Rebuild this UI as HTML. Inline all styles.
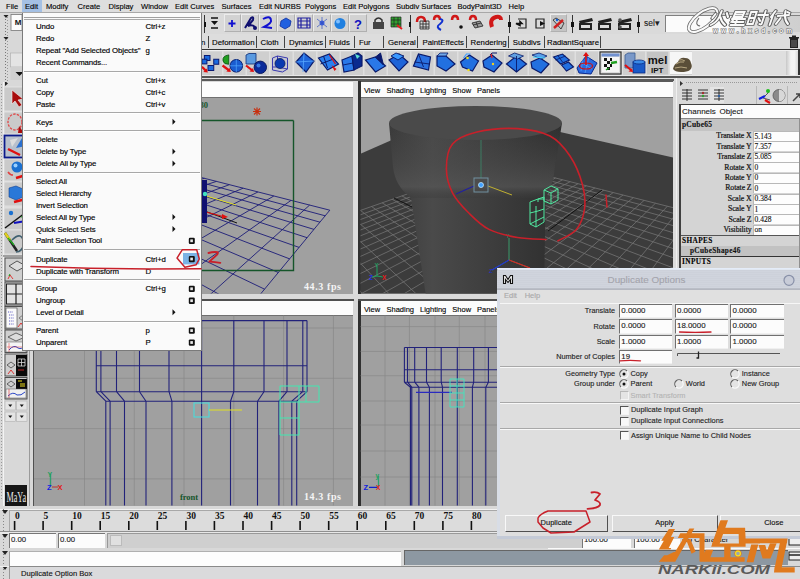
<!DOCTYPE html>
<html><head><meta charset="utf-8">
<style>
*{margin:0;padding:0;box-sizing:border-box}
html,body{width:800px;height:579px;overflow:hidden;background:#d8d8d8}
body{position:relative;font-family:"Liberation Sans",sans-serif;font-size:7.5px;color:#000}
.a{position:absolute}
.t{position:absolute;white-space:pre;line-height:1;-webkit-text-stroke-width:0.12px}
svg{position:absolute;overflow:visible}
</style></head><body>

<div class="a" style="left:0px;top:0px;width:800px;height:13px;background:#dedede;"></div>
<div class="a" style="left:0px;top:12px;width:800px;height:1px;background:#a8a8a8;"></div>
<div class="a" style="left:22px;top:0px;width:20px;height:12px;background:#a4c0e4;"></div>
<div class="t" style="left:6px;top:2.72px;font-size:7.6px;color:#000;">File</div>
<div class="t" style="left:25px;top:2.72px;font-size:7.6px;color:#000;">Edit</div>
<div class="t" style="left:46px;top:2.72px;font-size:7.6px;color:#000;">Modify</div>
<div class="t" style="left:77.5px;top:2.72px;font-size:7.6px;color:#000;">Create</div>
<div class="t" style="left:108.5px;top:2.72px;font-size:7.6px;color:#000;">Display</div>
<div class="t" style="left:141px;top:2.72px;font-size:7.6px;color:#000;">Window</div>
<div class="t" style="left:175px;top:2.72px;font-size:7.6px;color:#000;">Edit Curves</div>
<div class="t" style="left:221.5px;top:2.72px;font-size:7.6px;color:#000;">Surfaces</div>
<div class="t" style="left:259px;top:2.72px;font-size:7.6px;color:#000;">Edit NURBS</div>
<div class="t" style="left:305px;top:2.72px;font-size:7.6px;color:#000;">Polygons</div>
<div class="t" style="left:343px;top:2.72px;font-size:7.6px;color:#000;">Edit Polygons</div>
<div class="t" style="left:396px;top:2.72px;font-size:7.6px;color:#000;">Subdiv Surfaces</div>
<div class="t" style="left:457.5px;top:2.72px;font-size:7.6px;color:#000;">BodyPaint3D</div>
<div class="t" style="left:508.5px;top:2.72px;font-size:7.6px;color:#000;">Help</div>
<div class="a" style="left:0px;top:13px;width:800px;height:21px;background:#dadada;"></div>
<div class="a" style="left:204.2px;top:15px;width:1px;height:18px;background:#333;"></div>
<div class="a" style="left:203.6px;top:21.5px;width:2.2px;height:5px;background:#111;"></div>
<div class="a" style="left:223.5px;top:14px;width:17.0px;height:18px;background:#d2d2d2;border:1px solid;border-color:#ececec #b0b0b0 #b0b0b0 #ececec"></div>
<div class="a" style="left:240.5px;top:14px;width:18.0px;height:18px;background:#d2d2d2;border:1px solid;border-color:#ececec #b0b0b0 #b0b0b0 #ececec"></div>
<div class="a" style="left:258.5px;top:14px;width:18.5px;height:18px;background:#d2d2d2;border:1px solid;border-color:#ececec #b0b0b0 #b0b0b0 #ececec"></div>
<div class="a" style="left:277px;top:14px;width:18px;height:18px;background:#d2d2d2;border:1px solid;border-color:#ececec #b0b0b0 #b0b0b0 #ececec"></div>
<div class="a" style="left:295px;top:14px;width:18px;height:18px;background:#d2d2d2;border:1px solid;border-color:#ececec #b0b0b0 #b0b0b0 #ececec"></div>
<div class="a" style="left:313px;top:14px;width:18px;height:18px;background:#d2d2d2;border:1px solid;border-color:#ececec #b0b0b0 #b0b0b0 #ececec"></div>
<div class="a" style="left:331px;top:14px;width:18px;height:18px;background:#d2d2d2;border:1px solid;border-color:#ececec #b0b0b0 #b0b0b0 #ececec"></div>
<div class="a" style="left:349px;top:14px;width:18px;height:18px;background:#d2d2d2;border:1px solid;border-color:#ececec #b0b0b0 #b0b0b0 #ececec"></div>
<div class="a" style="left:550px;top:14px;width:17px;height:18px;background:#c4c4c4;border:1px solid;border-color:#ececec #b0b0b0 #b0b0b0 #ececec"></div>
<div class="a" style="left:409.5px;top:15px;width:1px;height:18px;background:#333;"></div>
<div class="a" style="left:408.9px;top:21.5px;width:2.2px;height:5px;background:#111;"></div>
<div class="a" style="left:509px;top:15px;width:1px;height:18px;background:#333;"></div>
<div class="a" style="left:508.4px;top:21.5px;width:2.2px;height:5px;background:#111;"></div>
<div class="a" style="left:572px;top:15px;width:1px;height:18px;background:#333;"></div>
<div class="a" style="left:571.4px;top:21.5px;width:2.2px;height:5px;background:#111;"></div>
<div class="a" style="left:638px;top:15px;width:1px;height:18px;background:#333;"></div>
<div class="a" style="left:637.4px;top:21.5px;width:2.2px;height:5px;background:#111;"></div>
<div class="a" style="left:665px;top:15px;width:135px;height:16.5px;background:linear-gradient(90deg,#fbfbfb 0,#fbfbfb 45%,#d4d4d4 75%,#cfcfcf 100%);border-top:1.5px solid #808080;border-left:1.5px solid #808080"></div>
<div class="t" style="left:644px;top:18.82px;font-size:8.5px;color:#222;">sel&#9662;</div>
<svg width="800" height="34" style="left:0;top:0">
<rect x="211" y="17" width="7" height="2" fill="#444"/><path d="M211 21h7l-3.5 4z" fill="#111"/><rect x="211" y="27" width="7" height="2" fill="#444"/>
<path d="M232 20v7M228.5 23.5h7" stroke="#1010d0" stroke-width="1.8"/>
<path d="M245 28 L251 18 Q254 16 253 20 L248 26 Q252 24 255 27" stroke="#101070" stroke-width="2" fill="none"/><circle cx="255" cy="28" r="2" fill="#101070"/>
<path d="M263 19 Q270 15 271 20 Q272 23 264 27 L272 28" stroke="#1010d0" stroke-width="2" fill="none"/>
<path d="M281 21 l5 -3 l5 3 l-1 5 l-5 3 l-5 -3z" fill="#2060e0" stroke="#1030a0" stroke-width="0.8"/>
<path d="M298 18 h12 v10 h-12z M301 18 v10 M307 18 v10 M298 21 h12 M298 25 h12" stroke="#2020a0" stroke-width="1.2" fill="none"/>
<circle cx="322" cy="23" r="2.5" fill="#4060e0"/><path d="M317 19l10 8M327 19l-10 8M322 17v12" stroke="#3050c0" stroke-width="0.7"/>
<circle cx="340" cy="23.5" r="5.5" fill="#2080e0"/><circle cx="338" cy="21.5" r="2" fill="#80c0ff"/>
<text x="354" y="29" font-family="Liberation Sans" font-weight="bold" font-size="13" fill="#1010c0">?</text>
<path d="M375 22 v-2 q3.5 -4 7 0 v2" stroke="#333" stroke-width="1.5" fill="none"/><rect x="373" y="22" width="11" height="7" fill="#444"/>
<rect x="391" y="17" width="10" height="10" fill="#30a030"/><path d="M391 17h10v10h-10zM394 17v10M398 17v10M391 20h10M391 24h10" stroke="#222" stroke-width="0.7" fill="none"/><path d="M397 25l5 4" stroke="#e02020" stroke-width="2"/>
<path d="M417 22 q0 -5 4 -5 q4 0 4 5" stroke="#d01818" stroke-width="2.5" fill="none"/><path d="M420 21h9v8h-9zM423 21v8M426 21v8M420 24h9M420 27h9" stroke="#222" stroke-width="0.8" fill="none"/>
<path d="M434 20 q0 -4 3 -4 q3 0 3 4" stroke="#d01818" stroke-width="2.5" fill="none"/><path d="M440 19 q5 1 0 5 q-5 3 1 6" stroke="#1030d0" stroke-width="2" fill="none"/>
<path d="M452 20 q0 -4 3 -4 q3 0 3 4" stroke="#d01818" stroke-width="2.5" fill="none"/><circle cx="461" cy="27" r="1.8" fill="#111"/>
<path d="M470 20 q0 -4 3 -4 q3 0 3 4" stroke="#d01818" stroke-width="2.5" fill="none"/><path d="M472 23l8 -2l3 5l-8 2z M476 22l2 5 M473 25l8 -2" stroke="#222" stroke-width="0.8" fill="#999"/>
<path d="M492 27 q-3 -8 4 -10 q5 -1 5 3" stroke="#d01818" stroke-width="4" fill="none"/>
<path d="M518 19h8v9h-8" stroke="#222" stroke-width="1.2" fill="none"/><path d="M516 23.5h6l-2 -2v4z" stroke="#111" stroke-width="1.5" fill="#111"/>
<path d="M536 19h8v9h-8z" stroke="#222" stroke-width="1.2" fill="none"/><path d="M540 21l5 2.5l-5 2.5z" fill="#111"/>
<path d="M553 20l3 -2 8 5 -3 6z" stroke="#222" stroke-width="0.8" fill="none"/><path d="M554 28l9 -8" stroke="#d02020" stroke-width="2.5"/><circle cx="557" cy="20" r="1.2" fill="#1060e0"/>
<path d="M579 21 l13 -3 l1 3 l-13 3z" fill="#222"/><rect x="579" y="23" width="13" height="7" fill="#222"/><rect x="581" y="25" width="9" height="3" fill="#ddd"/>
<path d="M598 21 l13 -3 l1 3 l-13 3z" fill="#222"/><rect x="598" y="23" width="13" height="7" fill="#222"/><rect x="600" y="25" width="9" height="3" fill="#ddd"/>
<path d="M618 21 l13 -3 l1 3 l-13 3z" fill="#222"/><rect x="618" y="23" width="13" height="7" fill="#222"/><rect x="620" y="25" width="9" height="3" fill="#ddd"/>
<circle cx="620" cy="20" r="1.8" fill="#555"/><circle cx="620" cy="27" r="1.8" fill="#555"/>
</svg>
<div class="a" style="left:0px;top:34px;width:800px;height:15px;background:#dddddd;"></div>
<div class="a" style="left:0px;top:48.5px;width:800px;height:1.5px;background:#333;"></div>
<div class="t" style="left:212px;top:39.01px;font-size:7.8px;color:#000;">Deformation</div>
<div class="t" style="left:260.5px;top:39.01px;font-size:7.8px;color:#000;">Cloth</div>
<div class="t" style="left:289px;top:39.01px;font-size:7.8px;color:#000;">Dynamics</div>
<div class="t" style="left:329px;top:39.01px;font-size:7.8px;color:#000;">Fluids</div>
<div class="t" style="left:359px;top:39.01px;font-size:7.8px;color:#000;">Fur</div>
<div class="t" style="left:388px;top:39.01px;font-size:7.8px;color:#000;">General</div>
<div class="t" style="left:422.5px;top:39.01px;font-size:7.8px;color:#000;">PaintEffects</div>
<div class="t" style="left:470.6px;top:39.01px;font-size:7.8px;color:#000;">Rendering</div>
<div class="t" style="left:512.8px;top:39.01px;font-size:7.8px;color:#000;">Subdivs</div>
<div class="t" style="left:547px;top:39.01px;font-size:7.8px;color:#000;">RadiantSquare</div>
<div class="a" style="left:207.7px;top:36px;width:1px;height:12px;background:#444;"></div>
<div class="a" style="left:256.4px;top:36px;width:1px;height:12px;background:#444;"></div>
<div class="a" style="left:283.9px;top:36px;width:1px;height:12px;background:#444;"></div>
<div class="a" style="left:325px;top:36px;width:1px;height:12px;background:#444;"></div>
<div class="a" style="left:354px;top:36px;width:1px;height:12px;background:#444;"></div>
<div class="a" style="left:383.4px;top:36px;width:1px;height:12px;background:#444;"></div>
<div class="a" style="left:417.4px;top:36px;width:1px;height:12px;background:#444;"></div>
<div class="a" style="left:466.2px;top:36px;width:1px;height:12px;background:#444;"></div>
<div class="a" style="left:508px;top:36px;width:1px;height:12px;background:#444;"></div>
<div class="a" style="left:543.9px;top:36px;width:1px;height:12px;background:#444;"></div>
<div class="a" style="left:600px;top:36px;width:1px;height:12px;background:#444;"></div>
<div class="t" style="left:201px;top:39.01px;font-size:7.8px;color:#000;">n</div>
<svg width="12" height="14" style="left:788px;top:35px"><rect x="2" y="3" width="8" height="10" fill="#222"/><rect x="1" y="2" width="10" height="1.5" fill="#222"/><rect x="4" y="0.5" width="4" height="1.5" fill="#222"/><path d="M4 5v7M6 5v7M8 5v7" stroke="#aaa" stroke-width="0.6"/></svg>
<div class="a" style="left:0px;top:50px;width:800px;height:26px;background:#dfdfdf;"></div>
<div class="a" style="left:0px;top:50px;width:800px;height:1px;background:#f0f0f0;"></div>
<div class="a" style="left:786px;top:51px;width:11.5px;height:24px;background:linear-gradient(90deg,#c8c8c8,#f2f2f2 40%,#f4f4f4 70%,#d8d8d8);"></div>
<div class="a" style="left:798px;top:50px;width:1.5px;height:26px;background:#333;"></div>
<div class="a" style="left:0px;top:74.5px;width:800px;height:1.5px;background:#e8e8e8;"></div>
<div class="a" style="left:0px;top:76px;width:800px;height:1.5px;background:#555;"></div>
<div class="a" style="left:0px;top:77.5px;width:800px;height:4px;background:#dedede;"></div>
<svg width="800" height="80" style="left:0;top:0">
<rect x="200" y="51.5" width="22" height="23.5" fill="#cfcfcf"/>
<rect x="223.5" y="51.5" width="22" height="23.5" fill="#cfcfcf"/>
<rect x="247" y="51.5" width="22" height="23.5" fill="#cfcfcf"/>
<rect x="270.5" y="51.5" width="22" height="23.5" fill="#cfcfcf"/>
<rect x="294" y="51.5" width="22" height="23.5" fill="#cfcfcf"/>
<rect x="317.5" y="51.5" width="22" height="23.5" fill="#cfcfcf"/>
<rect x="341" y="51.5" width="22" height="23.5" fill="#cfcfcf"/>
<rect x="364.5" y="51.5" width="22" height="23.5" fill="#cfcfcf"/>
<rect x="388" y="51.5" width="22" height="23.5" fill="#cfcfcf"/>
<rect x="411.5" y="51.5" width="22" height="23.5" fill="#cfcfcf"/>
<rect x="435" y="51.5" width="22" height="23.5" fill="#cfcfcf"/>
<rect x="458.5" y="51.5" width="22" height="23.5" fill="#cfcfcf"/>
<rect x="482" y="51.5" width="22" height="23.5" fill="#cfcfcf"/>
<rect x="505.5" y="51.5" width="22" height="23.5" fill="#cfcfcf"/>
<rect x="529" y="51.5" width="22" height="23.5" fill="#cfcfcf"/>
<rect x="552.5" y="51.5" width="22" height="23.5" fill="#cfcfcf"/>
<rect x="576" y="51.5" width="22" height="23.5" fill="#cfcfcf"/>
<rect x="599.5" y="51.5" width="22" height="23.5" fill="#cfcfcf"/>
<rect x="623" y="51.5" width="22" height="23.5" fill="#cfcfcf"/>
<rect x="646.5" y="51.5" width="22" height="23.5" fill="#cfcfcf"/>
<rect x="670" y="51.5" width="22" height="23.5" fill="#cfcfcf"/>
<rect x="204.4" y="55.5" width="5.599999999999994" height="5.0" fill="#1a6ae0" stroke="#0a1a70" stroke-width="1"/>
<rect x="201.9" y="59.2" width="5.0" height="4.699999999999996" fill="#1a6ae0" stroke="#0a1a70" stroke-width="1"/>
<rect x="213.75" y="59.25" width="5.0" height="5.0" fill="#1a6ae0" stroke="#0a1a70" stroke-width="1"/>
<rect x="208" y="65.5" width="5.75" height="5.0" fill="#1a6ae0" stroke="#0a1a70" stroke-width="1"/>
<path d="M201.9 66.75L206.3 71.1" stroke="#e01010" stroke-width="2.2"/><path d="M207.8 72.6l-4.5 -0.5 3.5 -3.5z" fill="#e01010"/>
<path d="M228.75 54.9 Q222 56 223 61 Q224 64.5 228.75 64.25z" fill="#20a020" stroke="#0a5010" stroke-width="0.8"/>
<circle cx="236.3" cy="65.8" r="6.3" fill="#1a5cd0" stroke="#0a2070" stroke-width="1"/><path d="M236.3 59.5v12.6M230 65.8h12.6" stroke="#50a8ff" stroke-width="0.7"/>
<path d="M222.5 65.5L229.3 70.5" stroke="#e01010" stroke-width="2.2"/><path d="M230.8 72l-4.5 -0.5 3.5 -3.5z" fill="#e01010"/>
<path d="M246 55l3 -1.5h7l0 9 -2 1.5h-8z" fill="#5a9ae0" stroke="#1a3a80" stroke-width="0.9"/>
<circle cx="260.3" cy="67.3" r="6.2" fill="#0a2a9a" stroke="#0a1a60" stroke-width="1"/><circle cx="258.5" cy="65.5" r="2" fill="#3a7ae0"/>
<path d="M246 65.5L252.5 70.5" stroke="#e01010" stroke-width="2.2"/><path d="M254 72l-4.5 -0.5 3.5 -3.5z" fill="#e01010"/>
<path d="M272.5 58l5 -2 10 2 0 11 -5 3 -10 -2z M277.5 56v11l10 2 M272.5 67l5 0" stroke="#3a3ab0" stroke-width="1" fill="#b8bcd8" fill-opacity="0.4"/>
<circle cx="280" cy="63.5" r="5" fill="#0a3ab0" stroke="#0a1a60" stroke-width="0.8"/>
<path d="M296 62l8 -9 10 8 -8 11z" fill="#1e64d8" stroke="#0a1a6a" stroke-width="1.2"/>
<path d="M304 53l-1 19M296 62l18 -1" stroke="#58a8ff" stroke-width="0.8"/>
<path d="M318.5 58l11 -4 9 10 -11 6z" fill="#2a80f0" stroke="#0a1a6a" stroke-width="1.2"/>
<path d="M323.5 56l4 12M320.5 64l13 -5" stroke="#0a1a6a" stroke-width="1"/><path d="M329.5 55l6 9" stroke="#e01010" stroke-width="1.3"/><path d="M331.5 65l3 6 2 -2z" fill="#e01010"/>
<path d="M342 60l10 -4 2 14 -10 2z" fill="#2a78e8" stroke="#0a1a6a" stroke-width="1.2"/>
<path d="M352 56l6 -3 4 3 0 10 -8 4z" fill="#0a2a90" stroke="#0a1a6a" stroke-width="1.1"/>
<path d="M355 54l5 2 -3 3z" fill="#60e0d0"/><path d="M343 65l10 -2" stroke="#0a1a6a" stroke-width="0.9"/>
<path d="M365.5 60l10 -3 10 9 -10 6z" fill="#2a78e8" stroke="#0a1a6a" stroke-width="1.2"/>
<path d="M375.5 57l5 -4 3 12z" fill="#0a1a70" stroke="#0a1a6a" stroke-width="1"/>
<path d="M389 60l10 -6 9 8 -9 9z" fill="#1e64d8" stroke="#0a1a6a" stroke-width="1.2"/>
<path d="M391 56l5 -3 8 3 -6 4z" fill="#3a98ff" stroke="#0a1a6a" stroke-width="0.9"/>
<path d="M413.5 66l5 -12 12 3 -2 13z" fill="#2a70e0" stroke="#0a1a6a" stroke-width="1.2"/>
<path d="M418.5 54l5 13M414.5 62l15 2" stroke="#0a1a6a" stroke-width="0.9"/>
<path d="M437 56h9l9 8 -9 7 -9 -5z" fill="#2270e0" stroke="#0a1a6a" stroke-width="1.2"/>
<path d="M437 56l3 -3h8l-2 3z" fill="#70a8e8" stroke="#0a1a6a" stroke-width="0.8"/>
<path d="M460.5 62l9 -7 9 6 -6 10 -10 -4z" fill="#2270e0" stroke="#0a1a6a" stroke-width="1.2"/>
<path d="M463.5 58l3 -4 4 0" stroke="#40a0ff" stroke-width="1.2" fill="none"/><circle cx="467.5" cy="58" r="1.3" fill="#f0e020"/><circle cx="468.5" cy="70" r="1.3" fill="#f0e020"/>
<path d="M483 61l9 -6 10 8 -8 9 -10 -5z" fill="#2270e0" stroke="#0a1a6a" stroke-width="1.2"/>
<path d="M490 55l2 -2h5" stroke="#0a1a6a" stroke-width="1" fill="none"/><path d="M491 54l1 4" stroke="#e02020" stroke-width="1.3"/><circle cx="493" cy="64" r="1.2" fill="#f0d020"/>
<path d="M506.5 64l10 -8 10 8 -10 8z" fill="#2270e0" stroke="#0a1a6a" stroke-width="1.2"/>
<path d="M508.5 56l6 -3 9 3 -6 3z" fill="#60a0e0" stroke="#0a1a6a" stroke-width="0.8"/>
<path d="M516.5 56v16" stroke="#0a1a6a" stroke-width="0.9"/>
<path d="M531 62l9 -4 9 6 -8 9 -9 -5z" fill="#2270e0" stroke="#0a1a6a" stroke-width="1.2"/>
<path d="M532 55l7 -2 8 3 -6 3z" fill="#5aa0e8" stroke="#0a1a6a" stroke-width="0.8"/>
<path d="M533 57l12 1" stroke="#40d0ff" stroke-width="1"/>
<path d="M553.5 57l9 -3 7 6 -9 4z" fill="#2270e0" stroke="#0a1a6a" stroke-width="1.1"/>
<path d="M561.5 65l7 -3 5 5 -7 4z" fill="#2270e0" stroke="#0a1a6a" stroke-width="1.1"/>
<path d="M557.5 55l5 7M555.5 60l10 -4" stroke="#0a1a6a" stroke-width="0.8"/>
<path d="M577 68l9 -12 11 7 -6 11 -12 -1z" fill="#2a6ae0" stroke="#0a2a90" stroke-width="1"/>
<path d="M581 62l11 7M583 59l-2 12M589 57l-4 16" stroke="#60b0ff" stroke-width="0.6"/>
<path d="M586 65v-11" stroke="#e01010" stroke-width="1.6"/><path d="M583 56l3 -4 3 4z" fill="#e01010"/><ellipse cx="586" cy="66" rx="6.5" ry="3" fill="none" stroke="#d01010" stroke-width="1.2"/>
<rect x="600" y="52" width="21" height="22" fill="#dcdcdc" stroke="#333" stroke-width="1.2"/>
<rect x="601.5" y="53.5" width="18" height="3" fill="#7090d0"/><rect x="602" y="57" width="17" height="15" fill="#f4f4f4"/>
<path d="M604 58h3v3h-3zM607 61h3v3h-3zM604 64h3v3h-3zM607 67h3v3h-3zM610 58h2v3h-2zM610 64h2v3h-2z" fill="#111"/><path d="M611 63l6 -1" stroke="#20a020" stroke-width="2.5"/><path d="M606 70l3 -2" stroke="#20a020" stroke-width="1.5"/>
<path d="M625 55l3 -2h7v13l-3 2h-7z" fill="#7a98c8" stroke="#3a5a90" stroke-width="0.8"/>
<rect x="633" y="62" width="12" height="11" fill="#1a5ac8" stroke="#0a2a80" stroke-width="0.8"/><ellipse cx="639" cy="62" rx="6" ry="2" fill="#3a8ae8" stroke="#0a2a80" stroke-width="0.8"/>
<path d="M625 65l6 5" stroke="#e01010" stroke-width="2.2"/><path d="M633 72l-4.5 -0.5 3.5 -3z" fill="#e01010"/>
<rect x="647" y="52" width="21" height="22" fill="#c4c4c4"/>
<text x="647.8" y="63.5" font-family="Liberation Sans" font-weight="bold" font-size="11" fill="#111" textLength="19.5" lengthAdjust="spacingAndGlyphs">mel</text>
<text x="651" y="72.5" font-family="Liberation Sans" font-weight="bold" font-size="8" fill="#111">IPT</text>
<rect x="670" y="52" width="22" height="22" fill="#f6f6f6"/>
<path d="M673 69q1 -5 5 -7q2 -5 7 -4q5 0 6 5q2 4 -1 7q-3 2 -9 2q-6 0 -8 -3z" fill="#5a4e38"/><path d="M676 64q4 -3 8 -2M679 60q3 -1 6 1M675 68q6 -2 12 0" stroke="#b8a882" stroke-width="1" fill="none"/>
</svg>
<div class="a" style="left:0px;top:82px;width:33px;height:424px;background:#d8d8d8;"></div>
<div class="a" style="left:29px;top:82px;width:1.2px;height:424px;background:#9a9a9a;"></div>
<div class="a" style="left:32.5px;top:82px;width:1.5px;height:424px;background:#505050;"></div>
<svg width="34" height="510" style="left:0;top:0">
<rect x="1" y="84" width="1" height="1" fill="#999"/>
<rect x="1" y="87" width="1" height="1" fill="#999"/>
<rect x="1" y="90" width="1" height="1" fill="#999"/>
<rect x="1" y="93" width="1" height="1" fill="#999"/>
<rect x="1" y="96" width="1" height="1" fill="#999"/>
<rect x="1" y="99" width="1" height="1" fill="#999"/>
<rect x="1" y="102" width="1" height="1" fill="#999"/>
<rect x="1" y="105" width="1" height="1" fill="#999"/>
<rect x="1" y="108" width="1" height="1" fill="#999"/>
<rect x="1" y="111" width="1" height="1" fill="#999"/>
<rect x="1" y="114" width="1" height="1" fill="#999"/>
<rect x="1" y="117" width="1" height="1" fill="#999"/>
<rect x="1" y="120" width="1" height="1" fill="#999"/>
<rect x="1" y="123" width="1" height="1" fill="#999"/>
<rect x="1" y="126" width="1" height="1" fill="#999"/>
<rect x="1" y="129" width="1" height="1" fill="#999"/>
<rect x="1" y="132" width="1" height="1" fill="#999"/>
<rect x="1" y="135" width="1" height="1" fill="#999"/>
<rect x="1" y="138" width="1" height="1" fill="#999"/>
<rect x="1" y="141" width="1" height="1" fill="#999"/>
<rect x="1" y="144" width="1" height="1" fill="#999"/>
<rect x="1" y="147" width="1" height="1" fill="#999"/>
<rect x="1" y="150" width="1" height="1" fill="#999"/>
<rect x="1" y="153" width="1" height="1" fill="#999"/>
<rect x="1" y="156" width="1" height="1" fill="#999"/>
<rect x="1" y="159" width="1" height="1" fill="#999"/>
<rect x="1" y="162" width="1" height="1" fill="#999"/>
<rect x="1" y="165" width="1" height="1" fill="#999"/>
<rect x="1" y="168" width="1" height="1" fill="#999"/>
<rect x="1" y="171" width="1" height="1" fill="#999"/>
<rect x="1" y="174" width="1" height="1" fill="#999"/>
<rect x="1" y="177" width="1" height="1" fill="#999"/>
<rect x="1" y="180" width="1" height="1" fill="#999"/>
<rect x="1" y="183" width="1" height="1" fill="#999"/>
<rect x="1" y="186" width="1" height="1" fill="#999"/>
<rect x="1" y="189" width="1" height="1" fill="#999"/>
<rect x="1" y="192" width="1" height="1" fill="#999"/>
<rect x="1" y="195" width="1" height="1" fill="#999"/>
<rect x="1" y="198" width="1" height="1" fill="#999"/>
<rect x="1" y="201" width="1" height="1" fill="#999"/>
<rect x="1" y="204" width="1" height="1" fill="#999"/>
<rect x="1" y="207" width="1" height="1" fill="#999"/>
<rect x="1" y="210" width="1" height="1" fill="#999"/>
<rect x="1" y="213" width="1" height="1" fill="#999"/>
<rect x="1" y="216" width="1" height="1" fill="#999"/>
<rect x="1" y="219" width="1" height="1" fill="#999"/>
<rect x="1" y="222" width="1" height="1" fill="#999"/>
<rect x="1" y="225" width="1" height="1" fill="#999"/>
<rect x="1" y="228" width="1" height="1" fill="#999"/>
<rect x="1" y="231" width="1" height="1" fill="#999"/>
<rect x="1" y="234" width="1" height="1" fill="#999"/>
<rect x="1" y="237" width="1" height="1" fill="#999"/>
<rect x="1" y="240" width="1" height="1" fill="#999"/>
<rect x="1" y="243" width="1" height="1" fill="#999"/>
<rect x="1" y="246" width="1" height="1" fill="#999"/>
<rect x="1" y="249" width="1" height="1" fill="#999"/>
<rect x="1" y="252" width="1" height="1" fill="#999"/>
<rect x="1" y="255" width="1" height="1" fill="#999"/>
<rect x="1" y="258" width="1" height="1" fill="#999"/>
<rect x="1" y="261" width="1" height="1" fill="#999"/>
<rect x="1" y="264" width="1" height="1" fill="#999"/>
<rect x="1" y="267" width="1" height="1" fill="#999"/>
<rect x="1" y="270" width="1" height="1" fill="#999"/>
<rect x="1" y="273" width="1" height="1" fill="#999"/>
<rect x="1" y="276" width="1" height="1" fill="#999"/>
<rect x="1" y="279" width="1" height="1" fill="#999"/>
<rect x="1" y="282" width="1" height="1" fill="#999"/>
<rect x="1" y="285" width="1" height="1" fill="#999"/>
<rect x="1" y="288" width="1" height="1" fill="#999"/>
<rect x="1" y="291" width="1" height="1" fill="#999"/>
<rect x="1" y="294" width="1" height="1" fill="#999"/>
<rect x="1" y="297" width="1" height="1" fill="#999"/>
<rect x="1" y="300" width="1" height="1" fill="#999"/>
<rect x="1" y="303" width="1" height="1" fill="#999"/>
<rect x="1" y="306" width="1" height="1" fill="#999"/>
<rect x="1" y="309" width="1" height="1" fill="#999"/>
<rect x="1" y="312" width="1" height="1" fill="#999"/>
<rect x="1" y="315" width="1" height="1" fill="#999"/>
<rect x="1" y="318" width="1" height="1" fill="#999"/>
<rect x="1" y="321" width="1" height="1" fill="#999"/>
<rect x="1" y="324" width="1" height="1" fill="#999"/>
<rect x="1" y="327" width="1" height="1" fill="#999"/>
<rect x="1" y="330" width="1" height="1" fill="#999"/>
<rect x="1" y="333" width="1" height="1" fill="#999"/>
<rect x="1" y="336" width="1" height="1" fill="#999"/>
<rect x="1" y="339" width="1" height="1" fill="#999"/>
<rect x="1" y="342" width="1" height="1" fill="#999"/>
<rect x="1" y="345" width="1" height="1" fill="#999"/>
<rect x="1" y="348" width="1" height="1" fill="#999"/>
<rect x="1" y="351" width="1" height="1" fill="#999"/>
<rect x="1" y="354" width="1" height="1" fill="#999"/>
<rect x="1" y="357" width="1" height="1" fill="#999"/>
<rect x="1" y="360" width="1" height="1" fill="#999"/>
<rect x="1" y="363" width="1" height="1" fill="#999"/>
<rect x="1" y="366" width="1" height="1" fill="#999"/>
<rect x="1" y="369" width="1" height="1" fill="#999"/>
<rect x="1" y="372" width="1" height="1" fill="#999"/>
<rect x="1" y="375" width="1" height="1" fill="#999"/>
<rect x="1" y="378" width="1" height="1" fill="#999"/>
<rect x="1" y="381" width="1" height="1" fill="#999"/>
<rect x="1" y="384" width="1" height="1" fill="#999"/>
<rect x="1" y="387" width="1" height="1" fill="#999"/>
<rect x="1" y="390" width="1" height="1" fill="#999"/>
<rect x="1" y="393" width="1" height="1" fill="#999"/>
<rect x="1" y="396" width="1" height="1" fill="#999"/>
<rect x="1" y="399" width="1" height="1" fill="#999"/>
<rect x="1" y="402" width="1" height="1" fill="#999"/>
<rect x="1" y="405" width="1" height="1" fill="#999"/>
<rect x="1" y="408" width="1" height="1" fill="#999"/>
<rect x="1" y="411" width="1" height="1" fill="#999"/>
<rect x="1" y="414" width="1" height="1" fill="#999"/>
<rect x="1" y="417" width="1" height="1" fill="#999"/>
<rect x="1" y="420" width="1" height="1" fill="#999"/>
<rect x="1" y="423" width="1" height="1" fill="#999"/>
<rect x="1" y="426" width="1" height="1" fill="#999"/>
<rect x="1" y="429" width="1" height="1" fill="#999"/>
<rect x="1" y="432" width="1" height="1" fill="#999"/>
<rect x="1" y="435" width="1" height="1" fill="#999"/>
<rect x="1" y="438" width="1" height="1" fill="#999"/>
<rect x="1" y="441" width="1" height="1" fill="#999"/>
<rect x="1" y="444" width="1" height="1" fill="#999"/>
<rect x="1" y="447" width="1" height="1" fill="#999"/>
<rect x="1" y="450" width="1" height="1" fill="#999"/>
<rect x="1" y="453" width="1" height="1" fill="#999"/>
<rect x="1" y="456" width="1" height="1" fill="#999"/>
<rect x="1" y="459" width="1" height="1" fill="#999"/>
<rect x="1" y="462" width="1" height="1" fill="#999"/>
<rect x="1" y="465" width="1" height="1" fill="#999"/>
<rect x="1" y="468" width="1" height="1" fill="#999"/>
<rect x="1" y="471" width="1" height="1" fill="#999"/>
<rect x="1" y="474" width="1" height="1" fill="#999"/>
<rect x="1" y="477" width="1" height="1" fill="#999"/>
<rect x="1" y="480" width="1" height="1" fill="#999"/>
<rect x="1" y="483" width="1" height="1" fill="#999"/>
<rect x="1" y="486" width="1" height="1" fill="#999"/>
<rect x="1" y="489" width="1" height="1" fill="#999"/>
<rect x="1" y="492" width="1" height="1" fill="#999"/>
<rect x="1" y="495" width="1" height="1" fill="#999"/>
<rect x="1" y="498" width="1" height="1" fill="#999"/>
<rect x="3" y="81" width="1" height="425" fill="#f4f4f4"/>
<path d="M5 81l3 2.5 -3 2.5z" fill="#222"/>
<rect x="4" y="87" width="24" height="24" fill="#cacaca" stroke="#e6e6e6" stroke-width="0.8"/>
<rect x="4" y="112" width="24" height="22" fill="#cacaca" stroke="#e6e6e6" stroke-width="0.8"/>
<rect x="4" y="135" width="24" height="23" fill="#cacaca" stroke="#e6e6e6" stroke-width="0.8"/>
<rect x="4" y="159" width="24" height="22" fill="#cacaca" stroke="#e6e6e6" stroke-width="0.8"/>
<rect x="4" y="182" width="24" height="24" fill="#cacaca" stroke="#e6e6e6" stroke-width="0.8"/>
<rect x="4" y="208" width="24" height="22" fill="#cacaca" stroke="#e6e6e6" stroke-width="0.8"/>
<rect x="4" y="230" width="24" height="24" fill="#cacaca" stroke="#e6e6e6" stroke-width="0.8"/>
<path d="M12 90l0 14 3 -3 4 6 3 -2 -4 -5 5 -1z" fill="#a80c0c" stroke="#f4f4f4" stroke-width="0.6"/>
<ellipse cx="15" cy="122" rx="7" ry="8" fill="none" stroke="#e04848" stroke-width="1.3" stroke-dasharray="2.5 1.2"/><path d="M19 126l5 7 -6 0z" fill="#a80c0c"/>
<rect x="4.5" y="135.5" width="23" height="22" fill="#b8c0cc" stroke="#0a1a8a" stroke-width="1.8"/>
<path d="M10 140l8 -2 -6 9z" fill="#dddddd"/><path d="M16 148l6 -10 4 8z" fill="#2a70d0"/><path d="M8 149l12 6" stroke="#e01010" stroke-width="2.5"/>
<circle cx="17" cy="167" r="5.5" fill="#1a70d0"/><circle cx="15.5" cy="165.5" r="2" fill="#9ad0ff"/><path d="M8 172q2 3 5 3" stroke="#e04040" stroke-width="1.5" fill="none"/><path d="M16 178l10 -3" stroke="#e01010" stroke-width="2.5"/>
<path d="M9 188l7 -2 7 3 0 8 -7 3 -7 -3z" fill="#2a78d8" stroke="#104090" stroke-width="0.6"/><path d="M14 202l12 -3" stroke="#e01010" stroke-width="2.5"/>
<circle cx="11" cy="213" r="2.2" fill="#1a70d0"/><path d="M5 228l20 -15" stroke="#111" stroke-width="1.5"/><path d="M14 223l12 -2" stroke="#1010c0" stroke-width="2"/><path d="M22 216l3 6" stroke="#10b010" stroke-width="2"/>
<path d="M5 233l12 18" stroke="#222" stroke-width="2.5"/><path d="M5 233l5 7" stroke="#e0d020" stroke-width="2.5"/><path d="M12 240q10 -10 12 4q-2 8 -8 8" stroke="#406070" stroke-width="1.6" fill="none"/><path d="M8 238l6 7" stroke="#20b020" stroke-width="1.2"/>
<rect x="3" y="255" width="26" height="2" fill="#a0a0a0"/>
<rect x="5" y="258" width="22" height="23" fill="#cfcfcf" stroke="#444" stroke-width="0.9"/>
<rect x="5" y="282" width="22" height="24" fill="#cfcfcf" stroke="#444" stroke-width="0.9"/>
<rect x="5" y="306.5" width="22" height="22.5" fill="#cfcfcf" stroke="#444" stroke-width="0.9"/>
<rect x="5" y="330" width="22" height="22.5" fill="#cfcfcf" stroke="#444" stroke-width="0.9"/>
<rect x="5" y="354" width="22" height="22" fill="#cfcfcf" stroke="#444" stroke-width="0.9"/>
<rect x="5" y="377.5" width="22" height="21.5" fill="#cfcfcf" stroke="#444" stroke-width="0.9"/>
<path d="M9 266l8 -5 9 5 -9 5z" fill="#dcdcdc" stroke="#333" stroke-width="0.8"/><path d="M8 279l2 -4 3 4" stroke="#e01010" stroke-width="0.8" fill="none"/><path d="M9 276l1 -2" stroke="#10a010" stroke-width="1"/>
<rect x="6.5" y="284" width="19" height="20" fill="#e2e2e2" stroke="#222" stroke-width="1"/><path d="M16 284v20M6.5 294h19" stroke="#222" stroke-width="1.2"/>
<rect x="6" y="308" width="11" height="20" fill="#fafafa" stroke="#444" stroke-width="0.6"/><path d="M8 312h5M9 315h5M9 318h5M9 321h5M9 324h5" stroke="#5050c0" stroke-width="0.9" stroke-dasharray="1 0.8"/><path d="M19 318l4 -3 4 3 -4 3z" fill="none" stroke="#444" stroke-width="0.6"/><path d="M18 327l3 -4 3 4" stroke="#e01010" stroke-width="0.8" fill="none"/>
<path d="M8 337l8 -4 9 4 -9 4z" fill="#dcdcdc" stroke="#333" stroke-width="0.7"/><rect x="6" y="342" width="20" height="10" fill="#f4f4f4" stroke="#555" stroke-width="0.5"/><path d="M9 350q5 -6 9 -2q4 2 7 -3" stroke="#1030c0" stroke-width="0.9" fill="none"/><path d="M9 343v9M7 347h18" stroke="#e03030" stroke-width="0.5"/>
<path d="M7 365l4 -3 4 3 -4 3z" fill="none" stroke="#333" stroke-width="0.7"/><rect x="16" y="355" width="11" height="21" fill="#0a0a0a"/><path d="M18 359h7v7h-7zM21.5 359v7M18 362.5h7" stroke="#ddd" stroke-width="0.8" fill="none"/><path d="M8 374l3 -4 3 4" stroke="#e01010" stroke-width="0.8" fill="none"/><path d="M18 370h6" stroke="#a02020" stroke-width="1.2"/>
<path d="M7 384l4 -3 4 3 -4 3z" fill="none" stroke="#333" stroke-width="0.7"/><rect x="16" y="379" width="11" height="10" fill="#0a0a0a"/><path d="M18 381h4M20 384h5M20 386h5" stroke="#f0e020" stroke-width="1.2"/><rect x="6" y="389" width="20" height="9" fill="#f0f0f0" stroke="#555" stroke-width="0.5"/><path d="M8 396q5 -5 9 -1q4 1 8 -3" stroke="#1030c0" stroke-width="0.9" fill="none"/><path d="M9 389v9" stroke="#e03030" stroke-width="0.6"/>
<rect x="5" y="401" width="10.5" height="9" fill="#e4e4e4" stroke="#b0b0b0" stroke-width="0.6"/><path d="M8.25 404.5h4l-2 2.5z" fill="#111"/>
<rect x="16.5" y="401" width="10.5" height="9" fill="#e4e4e4" stroke="#b0b0b0" stroke-width="0.6"/><path d="M19.75 404.5h4l-2 2.5z" fill="#111"/>
<rect x="5" y="412" width="10.5" height="9.5" fill="#e4e4e4" stroke="#b0b0b0" stroke-width="0.6"/><path d="M8.25 415.5h4l-2 2.5z" fill="#111"/>
<rect x="16.5" y="412" width="10.5" height="9.5" fill="#e4e4e4" stroke="#b0b0b0" stroke-width="0.6"/><path d="M19.75 415.5h4l-2 2.5z" fill="#111"/>
<rect x="5" y="485" width="22" height="21" fill="#161616"/>
<text x="6.5" y="502" font-family="Liberation Serif" font-size="15" fill="#ececec" textLength="19.5" lengthAdjust="spacingAndGlyphs">MaYa</text>
</svg>
<div class="a" style="left:33.5px;top:79px;width:640px;height:2.5px;background:#5a5a5a;"></div>
<div class="a" style="left:33.5px;top:81px;width:320px;height:213px;background:#d8d8d8;"></div>
<div class="a" style="left:34px;top:82px;width:318.5px;height:14.5px;background:#fcfcfc;"></div>
<div class="a" style="left:34px;top:96.5px;width:318.5px;height:1px;background:#707070;"></div>
<div class="a" style="left:34px;top:97.5px;width:318.5px;height:196px;background:#a0a0a0;"></div>
<div class="a" style="left:352.5px;top:81px;width:6px;height:219px;background:#dcdcdc;"></div>
<div class="a" style="left:358px;top:81px;width:2.5px;height:213px;background:#303030;"></div>
<div class="a" style="left:360.5px;top:82px;width:312.5px;height:14.5px;background:#fcfcfc;"></div>
<div class="a" style="left:360.5px;top:96.5px;width:312.5px;height:1px;background:#707070;"></div>
<div class="a" style="left:360.5px;top:97.5px;width:312.5px;height:196px;background:#a0a0a0;"></div>
<div class="a" style="left:673px;top:81px;width:4px;height:213px;background:#dcdcdc;"></div>
<div class="a" style="left:33.5px;top:293.5px;width:645px;height:6px;background:#dadada;"></div>
<div class="a" style="left:33.5px;top:299px;width:320px;height:2px;background:#505050;"></div>
<div class="a" style="left:358px;top:299px;width:320px;height:2px;background:#505050;"></div>
<div class="a" style="left:34px;top:301px;width:318.5px;height:13.5px;background:#fcfcfc;"></div>
<div class="a" style="left:34px;top:314.5px;width:318.5px;height:1px;background:#707070;"></div>
<div class="a" style="left:34px;top:315.5px;width:318.5px;height:190px;background:#a0a0a0;"></div>
<div class="a" style="left:358px;top:301px;width:2.5px;height:205px;background:#303030;"></div>
<div class="a" style="left:360.5px;top:301px;width:140px;height:13.5px;background:#fcfcfc;"></div>
<div class="a" style="left:360.5px;top:314.5px;width:140px;height:1px;background:#707070;"></div>
<div class="a" style="left:360.5px;top:315.5px;width:140px;height:190px;background:#a0a0a0;"></div>
<div class="a" style="left:33.5px;top:505.5px;width:645px;height:3px;background:#dadada;"></div>
<div class="t" style="left:364px;top:87.08px;font-size:7.5px;color:#000;">View</div>
<div class="t" style="left:364px;top:305.68px;font-size:7.5px;color:#000;">View</div>
<div class="t" style="left:386.5px;top:87.08px;font-size:7.5px;color:#000;">Shading</div>
<div class="t" style="left:386.5px;top:305.68px;font-size:7.5px;color:#000;">Shading</div>
<div class="t" style="left:420px;top:87.08px;font-size:7.5px;color:#000;">Lighting</div>
<div class="t" style="left:420px;top:305.68px;font-size:7.5px;color:#000;">Lighting</div>
<div class="t" style="left:452.3px;top:87.08px;font-size:7.5px;color:#000;">Show</div>
<div class="t" style="left:452.3px;top:305.68px;font-size:7.5px;color:#000;">Show</div>
<div class="t" style="left:477px;top:87.08px;font-size:7.5px;color:#000;">Panels</div>
<div class="t" style="left:477px;top:305.68px;font-size:7.5px;color:#000;">Panels</div>
<svg width="800" height="579" style="left:0;top:0"><defs><clipPath id="c1"><rect x="34" y="97.5" width="318.5" height="196"/></clipPath><clipPath id="c2"><rect x="360.5" y="97.5" width="312.5" height="196"/></clipPath><clipPath id="c3"><rect x="34" y="315.5" width="318.5" height="190"/></clipPath><clipPath id="c4"><rect x="360.5" y="315.5" width="140" height="190"/></clipPath><linearGradient id="cyl" x1="0" x2="1" y1="0" y2="0"><stop offset="0" stop-color="#3a3a3a"/><stop offset="0.25" stop-color="#4a4a4a"/><stop offset="1" stop-color="#2e2e2e"/></linearGradient><linearGradient id="cylb" x1="0" x2="0" y1="0" y2="1"><stop offset="0" stop-color="#484848"/><stop offset="1" stop-color="#3a3a3a"/></linearGradient><linearGradient id="cylup" x1="0" x2="0" y1="0" y2="1"><stop offset="0" stop-color="#484848" stop-opacity="0"/><stop offset="0.55" stop-color="#4e4e4e" stop-opacity="0.5"/><stop offset="0.85" stop-color="#565656" stop-opacity="0.7"/><stop offset="1" stop-color="#3a3a3a" stop-opacity="0.3"/></linearGradient></defs>
<g clip-path="url(#c1)">
<path d="M329.8 210.2L1.2 607.9M309.6 205.1L-29.2 509.8M291.0 200.4L-50.0 442.7M273.8 196.0L-65.2 394.0M257.9 192.0L-76.7 356.9M243.1 188.2L-85.7 327.8M229.3 184.7L-93.0 304.4M216.4 181.4L-99.0 285.0M204.4 178.3L-104.0 268.8M193.1 175.5L-108.3 255.1M182.4 172.8L-111.9 243.2M172.4 170.2L-115.1 232.9M163.0 167.8L-117.9 223.9M154.0 165.6L-120.4 215.9M145.6 163.4L-122.6 208.8M137.6 161.4L-124.6 202.4M130.0 159.4L-126.4 196.7M329.8 210.2L130.0 159.4M325.2 215.8L120.2 160.9M320.0 222.2L109.6 162.4M314.0 229.4L98.3 164.0M307.1 237.7L86.0 165.8M299.1 247.4L72.8 167.8M289.7 258.9L58.3 169.8M278.4 272.5L42.6 172.1M264.6 289.2L25.3 174.6M247.5 309.9L6.4 177.4M225.6 336.4L-14.6 180.4M196.7 371.4L-37.9 183.8M156.6 419.8L-63.9 187.6M97.4 491.4L-93.2 191.9M1.2 607.9L-126.4 196.7" stroke="#1c1c78" stroke-width="0.9" fill="none"/>
<path d="M293.5 120.5V270.5H34M293.5 120.5H34" stroke="#15552a" stroke-width="1.4" fill="none"/>
<path d="M202 210l35 13" stroke="#111" stroke-width="1"/><path d="M203 195l33 10" stroke="#e0e020" stroke-width="1"/><path d="M202 211l23 6" stroke="#e01010" stroke-width="1.2"/><path d="M222 214l6 3 -6 2z" fill="#e01010"/>
<rect x="199" y="180" width="8" height="43" fill="#101070"/><circle cx="205" cy="194" r="2.2" fill="#40e0c0"/>
<path d="M253 111.5h8M257 107.5v8M254 108.5l6 6M260 108.5l-6 6" stroke="#c83010" stroke-width="1.2"/>
<text x="199.5" y="107.8" font-family="Liberation Serif" font-weight="bold" font-size="8.5" fill="#15552a">80</text>
<text x="304" y="289.8" font-family="Liberation Serif" font-weight="bold" font-size="10" fill="#f4f4f4" textLength="37">44.3 fps</text>
</g>
<g clip-path="url(#c2)">
<path d="M360 153.9 L460.6 109.7 L676 158.1 L676 300 L360 300z" fill="#3c3c3c"/>
<path d="M496.0 163.0L227.2 257.0M501.0 164.3L228.2 262.3M506.3 165.6L229.2 268.1M511.6 166.9L230.3 274.2M517.2 168.4L231.5 280.7M523.0 169.8L232.8 287.7M529.0 171.3L234.1 295.2M535.2 172.9L235.6 303.4M541.7 174.5L237.2 312.1M548.4 176.2L238.9 321.7M555.4 178.0L240.8 332.1M562.6 179.8L242.9 343.4M570.2 181.7L245.1 355.8M578.1 183.7L247.6 369.5M586.3 185.8L250.4 384.7M594.9 187.9L253.4 401.6M603.8 190.2L256.9 420.6M613.2 192.6L260.8 442.0M623.0 195.0L265.2 466.3M633.3 197.6L270.3 494.2M644.1 200.4L276.1 526.6M655.5 203.2L283.0 564.5M667.4 206.2L291.2 609.6M680.0 209.4L301.1 664.1M693.3 212.7L313.3 731.4M707.3 216.3L328.7 816.4M722.1 220.0L348.9 927.3M737.8 224.0L376.2 1077.9M754.5 228.2L415.5 1294.4M772.3 232.7L476.8 1631.9M791.2 237.4L585.7 2231.6M811.4 242.5L832.7 3592.7M833.0 248.0L1938.8 9685.3M496.0 163.0L833.0 248.0M490.3 165.0L833.9 255.6M484.4 167.0L834.8 263.9M478.3 169.2L835.9 272.8M472.0 171.4L837.0 282.6M465.4 173.7L838.3 293.2M458.6 176.1L839.7 304.9M451.5 178.6L841.2 317.8M444.1 181.2L842.8 332.1M436.3 183.9L844.7 348.0M428.3 186.7L846.8 365.8M419.9 189.6L849.1 385.9M411.1 192.7L851.8 408.8M401.9 195.9L854.9 435.1M392.2 199.3L858.5 465.5M382.1 202.8L862.7 501.3M371.5 206.5L867.6 543.8M360.4 210.4L873.7 595.2M348.7 214.5L881.1 658.7M336.3 218.8L890.5 739.1M323.3 223.4L902.8 844.0M309.6 228.2L919.6 986.8M295.0 233.3L943.7 1192.6M279.6 238.7L981.4 1514.8M263.2 244.4L1048.9 2091.0M245.8 250.5L1204.3 3417.1M227.2 257.0L1938.8 9685.3" stroke="#747474" stroke-width="0.8" fill="none"/>
<path d="M548 231L602 190M394 198L412 207" stroke="#111" stroke-width="1"/>
<path d="M389 123 L393 167 C394.5 180 400 189 411 198 L426 296 L544 296 L545.6 198 C550 190 554 180 555 167 L562 123z" fill="url(#cyl)"/>
<path d="M389 123 L393 167 C394.5 180 400 189 411 198 L545.6 198 C550 190 554 180 555 167 L562 123z" fill="url(#cylup)"/>
<ellipse cx="475.5" cy="123" rx="86.5" ry="17" fill="#4a4a4a"/>
<path d="M481 178V140" stroke="#3a8a6a" stroke-width="0.8"/><path d="M488 186l24 9" stroke="#c0b030" stroke-width="1"/><path d="M474 186l-18 8" stroke="#2020a0" stroke-width="1.2"/>
<rect x="474" y="178" width="14" height="14" fill="none" stroke="#7090a0" stroke-width="1"/><circle cx="481" cy="185" r="2.5" fill="#40a0ff" stroke="#c0e8ff" stroke-width="0.8"/>
<path d="M544 190l7 -4 7 3v11l-7 4 -7 -3z M544 190l7 3v11 M551 193l7 -4 M538 199l6 -2v10 M530 202l8 -3h6 M530 202v22l6 3 8 -5v-15 M530 213l8 -2 6 -2 M536 206v21 M538 199v3 M530 224l14 -7" stroke="#50e8a0" stroke-width="1" fill="none"/>
<path d="M509 238V260M509 260l21 8M509 260l-17 10" stroke="#3a9a6a" stroke-width="1"/><path d="M509 260l21 8" stroke="#e02020" stroke-width="1.2"/><path d="M509 260l-17 10" stroke="#2030d0" stroke-width="1.2"/>
<text x="506" y="238" font-family="Liberation Sans" font-size="5" fill="#40b080">Y</text><text x="528" y="273" font-family="Liberation Sans" font-size="6" fill="#e02020">X</text><text x="489" y="273" font-family="Liberation Sans" font-size="6" fill="#2030d0">Z</text>
<path d="M377 266v10M377 276l-5 1M377 276l6 1" stroke="#20a060" stroke-width="1"/><text x="374.5" y="267" font-family="Liberation Sans" font-weight="bold" font-size="6" fill="#20a060">Y</text><text x="369" y="280" font-family="Liberation Sans" font-weight="bold" font-size="6.5" fill="#2030e0">Z</text><text x="382" y="280" font-family="Liberation Sans" font-weight="bold" font-size="6.5" fill="#e02020">X</text>
</g>
<g clip-path="url(#c3)">
<path d="M84.5 315V506M134.3 315V506M184 315V506M233.8 315V506M283.6 315V506M333.4 315V506M34 328H353M34 378.3H353M34 428.6H353M34 478.9H353" stroke="#888" stroke-width="0.7" fill="none"/>
<path d="M96.3 320.6H307M96.3 365.8H307M96.3 391.7H307M105.8 401.2H297.6M96.3 320.6V391.7M100.9 320.6V391.7M116.5 320.6V391.7M139.5 320.6V391.7M169 320.6V391.7M201.6 320.6V391.7M233.8 320.6V391.7M264 320.6V391.7M287 320.6V391.7M302.8 320.6V391.7M307 320.6V391.7M105.8 401.2V506M110.1 401.2V506M124.5 401.2V506M146 401.2V506M171.9 401.2V506M201.6 401.2V506M230.5 401.2V506M257.5 401.2V506M278.9 401.2V506M291.8 401.2V506M296.7 401.2V506M96.3 391.7L105.8 401.2M100.9 391.7L110.1 401.2M116.5 391.7L124.5 401.2M139.5 391.7L146 401.2M169 391.7L171.9 401.2M201.6 391.7L201.6 401.2M233.8 391.7L230.5 401.2M264 391.7L257.5 401.2M287 391.7L278.9 401.2M302.8 391.7L291.8 401.2M307 391.7L296.7 401.2" stroke="#22227a" stroke-width="1.1" fill="none"/>
<rect x="194" y="403" width="15" height="14" fill="none" stroke="#40e0e0" stroke-width="1"/><path d="M209 410H242" stroke="#e0e020" stroke-width="1"/>
<path d="M280 386h39v16h-39zM280 402v33h19v-33M299 386v16M306 386v16M280 418h19" stroke="#40e8b0" stroke-width="1" fill="none"/>
<path d="M50.5 474v11" stroke="#30a070" stroke-width="1.4"/><text x="47.5" y="477" font-family="Liberation Sans" font-weight="bold" font-size="7" fill="#20a060">Y</text><path d="M52 487h6" stroke="#c03030" stroke-width="1"/><text x="47" y="489.5" font-family="Liberation Sans" font-weight="bold" font-size="7.5" fill="#1020e0">Z</text><text x="57.5" y="489.5" font-family="Liberation Sans" font-weight="bold" font-size="7.5" fill="#e01818">X</text>
<text x="180" y="500" font-family="Liberation Serif" font-weight="bold" font-size="8.5" fill="#15552a" textLength="18">front</text>
<text x="304" y="500" font-family="Liberation Serif" font-weight="bold" font-size="10" fill="#f4f4f4" textLength="37">14.3 fps</text>
</g>
<g clip-path="url(#c4)">
<path d="M385 315V506M409.4 315V506M435 315V506M459.3 315V506M485 315V506M360 326.6H500M360 351.4H500M360 375.7H500M360 401H500M360 425H500M360 451H500M360 477H500" stroke="#888" stroke-width="0.7" fill="none"/>
<path d="M404.4 347.5H510M404.4 369.8H510M404.4 382.2H510M410.5 387.2H510M404.4 347.5V382.2M407.5 347.5V382.2M414.7 347.5V382.2M426.5 347.5V382.2M441.2 347.5V382.2M457.3 347.5V382.2M473.7 347.5V382.2M488.4 347.5V382.2M503 347.5V382.2M410.5 387.2V506M411.8 387.2V506M418.9 387.2V506M429.4 387.2V506M442.5 387.2V506M457.3 387.2V506M472.4 387.2V506M485.8 387.2V506M500 387.2V506M404.4 382.2L410.5 387.2M407.5 382.2L411.8 387.2M414.7 382.2L418.9 387.2M426.5 382.2L429.4 387.2M441.2 382.2L442.5 387.2M457.3 382.2L457.3 387.2M473.7 382.2L472.4 387.2M488.4 382.2L485.8 387.2M503 382.2L500 387.2" stroke="#22227a" stroke-width="1.1" fill="none"/>
<path d="M416 392.3H452" stroke="#2a2ac0" stroke-width="1.2"/><path d="M450 379h14v28h-14zM450 386h14M450 393h14M450 400h14M457 379v28" stroke="#40e8c0" stroke-width="0.9" fill="none"/>
<path d="M378.5 476v10" stroke="#30a070" stroke-width="1.3"/><text x="375.5" y="477.5" font-family="Liberation Sans" font-weight="bold" font-size="6.5" fill="#20a060">y</text><path d="M369 487.3h8" stroke="#1020d0" stroke-width="1.2"/><text x="363.5" y="489.5" font-family="Liberation Sans" font-weight="bold" font-size="7.5" fill="#1020e0">Z</text><text x="376" y="489.5" font-family="Liberation Sans" font-weight="bold" font-size="6.5" fill="#e01818">X</text>
</g>
</svg>
<div class="a" style="left:676px;top:78px;width:124px;height:192px;background:#d8d8d8;"></div>
<div class="a" style="left:676px;top:78px;width:1px;height:192px;background:#f0f0f0;"></div>
<svg width="124" height="40" style="left:676px;top:78px">
<path d="M4 3l3 2.5 -3 2.5z" fill="#333"/>
<rect x="10" y="4" width="1" height="1" fill="#999"/>
<rect x="12" y="4" width="1" height="1" fill="#999"/>
<rect x="14" y="4" width="1" height="1" fill="#999"/>
<rect x="16" y="4" width="1" height="1" fill="#999"/>
<rect x="18" y="4" width="1" height="1" fill="#999"/>
<rect x="20" y="4" width="1" height="1" fill="#999"/>
<rect x="22" y="4" width="1" height="1" fill="#999"/>
<rect x="24" y="4" width="1" height="1" fill="#999"/>
<rect x="26" y="4" width="1" height="1" fill="#999"/>
<rect x="28" y="4" width="1" height="1" fill="#999"/>
<rect x="30" y="4" width="1" height="1" fill="#999"/>
<rect x="32" y="4" width="1" height="1" fill="#999"/>
<rect x="34" y="4" width="1" height="1" fill="#999"/>
<rect x="36" y="4" width="1" height="1" fill="#999"/>
<rect x="38" y="4" width="1" height="1" fill="#999"/>
<rect x="40" y="4" width="1" height="1" fill="#999"/>
<rect x="42" y="4" width="1" height="1" fill="#999"/>
<rect x="44" y="4" width="1" height="1" fill="#999"/>
<rect x="46" y="4" width="1" height="1" fill="#999"/>
<rect x="48" y="4" width="1" height="1" fill="#999"/>
<rect x="50" y="4" width="1" height="1" fill="#999"/>
<rect x="52" y="4" width="1" height="1" fill="#999"/>
<rect x="54" y="4" width="1" height="1" fill="#999"/>
<rect x="56" y="4" width="1" height="1" fill="#999"/>
<rect x="58" y="4" width="1" height="1" fill="#999"/>
<rect x="60" y="4" width="1" height="1" fill="#999"/>
<rect x="62" y="4" width="1" height="1" fill="#999"/>
<rect x="64" y="4" width="1" height="1" fill="#999"/>
<rect x="66" y="4" width="1" height="1" fill="#999"/>
<rect x="68" y="4" width="1" height="1" fill="#999"/>
<rect x="70" y="4" width="1" height="1" fill="#999"/>
<rect x="72" y="4" width="1" height="1" fill="#999"/>
<rect x="74" y="4" width="1" height="1" fill="#999"/>
<rect x="76" y="4" width="1" height="1" fill="#999"/>
<rect x="78" y="4" width="1" height="1" fill="#999"/>
<rect x="80" y="4" width="1" height="1" fill="#999"/>
<rect x="82" y="4" width="1" height="1" fill="#999"/>
<rect x="84" y="4" width="1" height="1" fill="#999"/>
<rect x="86" y="4" width="1" height="1" fill="#999"/>
<rect x="88" y="4" width="1" height="1" fill="#999"/>
<rect x="90" y="4" width="1" height="1" fill="#999"/>
<rect x="92" y="4" width="1" height="1" fill="#999"/>
<rect x="94" y="4" width="1" height="1" fill="#999"/>
<rect x="96" y="4" width="1" height="1" fill="#999"/>
<rect x="98" y="4" width="1" height="1" fill="#999"/>
<rect x="100" y="4" width="1" height="1" fill="#999"/>
<rect x="102" y="4" width="1" height="1" fill="#999"/>
<rect x="104" y="4" width="1" height="1" fill="#999"/>
<rect x="106" y="4" width="1" height="1" fill="#999"/>
<rect x="108" y="4" width="1" height="1" fill="#999"/>
<rect x="110" y="4" width="1" height="1" fill="#999"/>
<rect x="112" y="4" width="1" height="1" fill="#999"/>
<rect x="114" y="4" width="1" height="1" fill="#999"/>
<rect x="116" y="4" width="1" height="1" fill="#999"/>
<rect x="118" y="4" width="1" height="1" fill="#999"/>
<rect x="120" y="4" width="1" height="1" fill="#999"/>
<rect x="34" y="9" width="14" height="16" fill="#e4e4e4"/>
<path d="M6 12h10M6 15h10M6 18h10M6 21h10M11 11v12" stroke="#222" stroke-width="0.9"/>
<path d="M22 12h10M22 15h10M22 18h10M22 21h10" stroke="#222" stroke-width="0.9"/><circle cx="27" cy="15" r="1.2" fill="#a03030"/><circle cx="27" cy="18" r="1.2" fill="#30a030"/>
<path d="M38 12h10M38 15h10M38 18h10M38 21h10M43 11v12" stroke="#222" stroke-width="0.9"/><circle cx="43" cy="18" r="1.2" fill="#3060a0"/>
<path d="M87 20l6 -6M87 20l7 2" stroke="#333" stroke-width="0.8"/><path d="M83 21l6 -3" stroke="#1020e0" stroke-width="2.2"/><path d="M89 22l5 3" stroke="#e01010" stroke-width="2.2"/><circle cx="92" cy="13" r="2" fill="#20c020"/>
<circle cx="103" cy="17.5" r="6" fill="#8a8a8a" stroke="#555" stroke-width="0.8"/><path d="M103 11.5a6 6 0 0 1 0 12z" fill="#d8d8d8"/>
<path d="M117 23l7 -7M120 16h4v4" stroke="#444" stroke-width="1.5" fill="none"/>
<rect x="80" y="8" width="1" height="18" fill="#b8b8b8"/><rect x="111" y="8" width="1" height="18" fill="#b8b8b8"/>
</svg>
<div class="a" style="left:679px;top:103.5px;width:121px;height:1.5px;background:#404040;"></div>
<div class="a" style="left:679px;top:103.5px;width:1.5px;height:166px;background:#404040;"></div>
<div class="a" style="left:680.5px;top:105px;width:119.5px;height:12.5px;background:#fcfcfc;"></div>
<div class="t" style="left:682px;top:107.90px;font-size:8px;color:#222;">Channels</div>
<div class="t" style="left:719.5px;top:107.90px;font-size:8px;color:#222;">Object</div>
<div class="a" style="left:680.5px;top:117.5px;width:119.5px;height:1px;background:#888;"></div>
<div class="a" style="left:680.5px;top:118.5px;width:119.5px;height:150px;background:#d4d4d4;"></div>
<div class="a" style="left:680.5px;top:118.5px;width:119.5px;height:12.5px;background:#c4c4c4;"></div>
<div class="t" style="left:682px;top:121.17px;font-size:7.5px;color:#111;font-family:'Liberation Serif';font-weight:bold;letter-spacing:0.2px">pCube65</div>
<div class="a" style="left:753px;top:131px;width:46px;height:10px;background:#fdfdfd;border-top:1px solid #b8b8b8;border-left:1px solid #b8b8b8"></div>
<div class="t" style="right:48.5px;top:132.4px;font-size:7.8px;font-family:'Liberation Serif';color:#111;letter-spacing:-0.1px;-webkit-text-stroke:0.2px #111">Translate X</div>
<div class="t" style="left:754.5px;top:132.78px;font-size:7.5px;color:#111;font-family:'Liberation Serif'">5.143</div>
<div class="a" style="left:753px;top:141.3px;width:46px;height:10px;background:#fdfdfd;border-top:1px solid #b8b8b8;border-left:1px solid #b8b8b8"></div>
<div class="t" style="right:48.5px;top:142.7px;font-size:7.8px;font-family:'Liberation Serif';color:#111;letter-spacing:-0.1px;-webkit-text-stroke:0.2px #111">Translate Y</div>
<div class="t" style="left:754.5px;top:143.08px;font-size:7.5px;color:#111;font-family:'Liberation Serif'">7.357</div>
<div class="a" style="left:753px;top:151.7px;width:46px;height:10px;background:#fdfdfd;border-top:1px solid #b8b8b8;border-left:1px solid #b8b8b8"></div>
<div class="t" style="right:48.5px;top:153.1px;font-size:7.8px;font-family:'Liberation Serif';color:#111;letter-spacing:-0.1px;-webkit-text-stroke:0.2px #111">Translate Z</div>
<div class="t" style="left:754.5px;top:153.47px;font-size:7.5px;color:#111;font-family:'Liberation Serif'">5.085</div>
<div class="a" style="left:753px;top:162.4px;width:46px;height:10px;background:#fdfdfd;border-top:1px solid #b8b8b8;border-left:1px solid #b8b8b8"></div>
<div class="t" style="right:48.5px;top:163.8px;font-size:7.8px;font-family:'Liberation Serif';color:#111;letter-spacing:-0.1px;-webkit-text-stroke:0.2px #111">Rotate X</div>
<div class="t" style="left:754.5px;top:164.18px;font-size:7.5px;color:#111;font-family:'Liberation Serif'">0</div>
<div class="a" style="left:753px;top:172.7px;width:46px;height:10px;background:#fdfdfd;border-top:1px solid #b8b8b8;border-left:1px solid #b8b8b8"></div>
<div class="t" style="right:48.5px;top:174.1px;font-size:7.8px;font-family:'Liberation Serif';color:#111;letter-spacing:-0.1px;-webkit-text-stroke:0.2px #111">Rotate Y</div>
<div class="t" style="left:754.5px;top:174.47px;font-size:7.5px;color:#111;font-family:'Liberation Serif'">0</div>
<div class="a" style="left:753px;top:183px;width:46px;height:10px;background:#fdfdfd;border-top:1px solid #b8b8b8;border-left:1px solid #b8b8b8"></div>
<div class="t" style="right:48.5px;top:184.4px;font-size:7.8px;font-family:'Liberation Serif';color:#111;letter-spacing:-0.1px;-webkit-text-stroke:0.2px #111">Rotate Z</div>
<div class="t" style="left:754.5px;top:184.78px;font-size:7.5px;color:#111;font-family:'Liberation Serif'">0</div>
<div class="a" style="left:753px;top:193.5px;width:46px;height:10px;background:#fdfdfd;border-top:1px solid #b8b8b8;border-left:1px solid #b8b8b8"></div>
<div class="t" style="right:48.5px;top:194.9px;font-size:7.8px;font-family:'Liberation Serif';color:#111;letter-spacing:-0.1px;-webkit-text-stroke:0.2px #111">Scale X</div>
<div class="t" style="left:754.5px;top:195.28px;font-size:7.5px;color:#111;font-family:'Liberation Serif'">0.384</div>
<div class="a" style="left:753px;top:203.8px;width:46px;height:10px;background:#fdfdfd;border-top:1px solid #b8b8b8;border-left:1px solid #b8b8b8"></div>
<div class="t" style="right:48.5px;top:205.2px;font-size:7.8px;font-family:'Liberation Serif';color:#111;letter-spacing:-0.1px;-webkit-text-stroke:0.2px #111">Scale Y</div>
<div class="t" style="left:754.5px;top:205.58px;font-size:7.5px;color:#111;font-family:'Liberation Serif'">1</div>
<div class="a" style="left:753px;top:214.2px;width:46px;height:10px;background:#fdfdfd;border-top:1px solid #b8b8b8;border-left:1px solid #b8b8b8"></div>
<div class="t" style="right:48.5px;top:215.6px;font-size:7.8px;font-family:'Liberation Serif';color:#111;letter-spacing:-0.1px;-webkit-text-stroke:0.2px #111">Scale Z</div>
<div class="t" style="left:754.5px;top:215.97px;font-size:7.5px;color:#111;font-family:'Liberation Serif'">0.428</div>
<div class="a" style="left:753px;top:224.5px;width:46px;height:10px;background:#fdfdfd;border-top:1px solid #b8b8b8;border-left:1px solid #b8b8b8"></div>
<div class="t" style="right:48.5px;top:225.9px;font-size:7.8px;font-family:'Liberation Serif';color:#111;letter-spacing:-0.1px;-webkit-text-stroke:0.2px #111">Visibility</div>
<div class="t" style="left:754.5px;top:226.28px;font-size:7.5px;color:#111;font-family:'Liberation Serif'">on</div>
<div class="a" style="left:680.5px;top:235px;width:119.5px;height:10.5px;background:#d4d4d4;border-top:1.2px solid #555"></div>
<div class="t" style="left:682px;top:237.38px;font-size:7.3px;color:#000;font-family:'Liberation Serif';font-weight:bold;letter-spacing:0.4px">SHAPES</div>
<div class="a" style="left:680.5px;top:245.5px;width:119.5px;height:10.5px;background:#c2c2c2;"></div>
<div class="t" style="left:690px;top:247.29px;font-size:7.3px;color:#111;font-family:'Liberation Serif';font-weight:bold;letter-spacing:0.3px">pCubeShape46</div>
<div class="a" style="left:680.5px;top:255.5px;width:119.5px;height:11.5px;background:#d4d4d4;border-top:1.3px solid #333"></div>
<div class="t" style="left:682px;top:258.29px;font-size:7.3px;color:#000;font-family:'Liberation Serif';font-weight:bold;letter-spacing:0.4px">INPUTS</div>
<div class="a" style="left:798.5px;top:118px;width:1.5px;height:150px;background:#909090;"></div>
<div class="a" style="left:0px;top:506px;width:800px;height:73px;background:#d8d8d8;"></div>
<div class="a" style="left:0px;top:508.5px;width:800px;height:1px;background:#f2f2f2;"></div>
<div class="a" style="left:3px;top:509px;width:1px;height:1px;background:#888;"></div>
<div class="a" style="left:3px;top:512px;width:1px;height:1px;background:#888;"></div>
<div class="a" style="left:3px;top:515px;width:1px;height:1px;background:#888;"></div>
<div class="a" style="left:3px;top:518px;width:1px;height:1px;background:#888;"></div>
<div class="a" style="left:3px;top:521px;width:1px;height:1px;background:#888;"></div>
<div class="a" style="left:3px;top:524px;width:1px;height:1px;background:#888;"></div>
<div class="a" style="left:3px;top:527px;width:1px;height:1px;background:#888;"></div>
<div class="a" style="left:3px;top:530px;width:1px;height:1px;background:#888;"></div>
<div class="a" style="left:3px;top:533px;width:1px;height:1px;background:#888;"></div>
<div class="a" style="left:3px;top:536px;width:1px;height:1px;background:#888;"></div>
<div class="a" style="left:3px;top:539px;width:1px;height:1px;background:#888;"></div>
<div class="a" style="left:3px;top:542px;width:1px;height:1px;background:#888;"></div>
<div class="a" style="left:3px;top:545px;width:1px;height:1px;background:#888;"></div>
<div class="a" style="left:3px;top:548px;width:1px;height:1px;background:#888;"></div>
<div class="a" style="left:3px;top:551px;width:1px;height:1px;background:#888;"></div>
<div class="a" style="left:3px;top:554px;width:1px;height:1px;background:#888;"></div>
<div class="a" style="left:3px;top:557px;width:1px;height:1px;background:#888;"></div>
<div class="a" style="left:3px;top:560px;width:1px;height:1px;background:#888;"></div>
<div class="a" style="left:3px;top:563px;width:1px;height:1px;background:#888;"></div>
<div class="a" style="left:3px;top:566px;width:1px;height:1px;background:#888;"></div>
<div class="a" style="left:3px;top:569px;width:1px;height:1px;background:#888;"></div>
<div class="a" style="left:3px;top:572px;width:1px;height:1px;background:#888;"></div>
<div class="a" style="left:3px;top:575px;width:1px;height:1px;background:#888;"></div>
<div class="a" style="left:3px;top:578px;width:1px;height:1px;background:#888;"></div>
<svg width="8" height="6" style="left:2px;top:510px"><path d="M0 0h6l-3 4z" fill="#222"/></svg>
<svg width="8" height="6" style="left:2px;top:534px"><path d="M0 0h6l-3 4z" fill="#222"/></svg>
<svg width="8" height="6" style="left:2px;top:551px"><path d="M0 0h6l-3 4z" fill="#222"/></svg>
<svg width="8" height="6" style="left:2px;top:566px"><path d="M0 0h6l-3 4z" fill="#222"/></svg>
<div class="a" style="left:9px;top:509.5px;width:791px;height:21.5px;background:#dcdcdc;border-left:1px solid #a8a8a8;border-top:1px solid #a8a8a8"></div>
<svg width="800" height="579" style="left:0;top:0"><path d="M14.6 521V530M43.1 521V530M71.7 521V530M100.2 521V530M128.8 521V530M157.3 521V530M185.9 521V530M214.4 521V530M243.0 521V530M271.6 521V530M300.1 521V530M328.7 521V530M357.2 521V530M385.8 521V530M414.3 521V530M442.9 521V530M471.4 521V530" stroke="#111" stroke-width="1.6"/><text x="15.1" y="518.8" font-family="Liberation Serif" font-weight="bold" font-size="9.5" fill="#111">0</text><text x="43.6" y="518.8" font-family="Liberation Serif" font-weight="bold" font-size="9.5" fill="#111">5</text><text x="72.2" y="518.8" font-family="Liberation Serif" font-weight="bold" font-size="9.5" fill="#111">10</text><text x="100.8" y="518.8" font-family="Liberation Serif" font-weight="bold" font-size="9.5" fill="#111">15</text><text x="129.3" y="518.8" font-family="Liberation Serif" font-weight="bold" font-size="9.5" fill="#111">20</text><text x="157.8" y="518.8" font-family="Liberation Serif" font-weight="bold" font-size="9.5" fill="#111">25</text><text x="186.4" y="518.8" font-family="Liberation Serif" font-weight="bold" font-size="9.5" fill="#111">30</text><text x="214.9" y="518.8" font-family="Liberation Serif" font-weight="bold" font-size="9.5" fill="#111">35</text><text x="243.5" y="518.8" font-family="Liberation Serif" font-weight="bold" font-size="9.5" fill="#111">40</text><text x="272.1" y="518.8" font-family="Liberation Serif" font-weight="bold" font-size="9.5" fill="#111">45</text><text x="300.6" y="518.8" font-family="Liberation Serif" font-weight="bold" font-size="9.5" fill="#111">50</text><text x="329.2" y="518.8" font-family="Liberation Serif" font-weight="bold" font-size="9.5" fill="#111">55</text><text x="357.7" y="518.8" font-family="Liberation Serif" font-weight="bold" font-size="9.5" fill="#111">60</text><text x="386.3" y="518.8" font-family="Liberation Serif" font-weight="bold" font-size="9.5" fill="#111">65</text><text x="414.8" y="518.8" font-family="Liberation Serif" font-weight="bold" font-size="9.5" fill="#111">70</text><text x="443.4" y="518.8" font-family="Liberation Serif" font-weight="bold" font-size="9.5" fill="#111">75</text><text x="471.9" y="518.8" font-family="Liberation Serif" font-weight="bold" font-size="9.5" fill="#111">80</text></svg>
<div class="a" style="left:0px;top:531px;width:800px;height:1px;background:#909090;"></div>
<div class="a" style="left:0px;top:532px;width:800px;height:2px;background:#e8e8e8;"></div>
<div class="a" style="left:9px;top:533px;width:47px;height:15px;background:#fcfcfc;border-top:1px solid #777;border-left:1px solid #777"></div>
<div class="t" style="left:11px;top:536.21px;font-size:7.8px;color:#222;">0.00</div>
<div class="a" style="left:58px;top:533px;width:47px;height:15px;background:#fcfcfc;border-top:1px solid #777;border-left:1px solid #777"></div>
<div class="t" style="left:60px;top:536.21px;font-size:7.8px;color:#222;">0.00</div>
<div class="a" style="left:107px;top:533px;width:475px;height:15px;background:#cfcfcf;border-top:1px solid #999;border-left:1px solid #999"></div>
<div class="a" style="left:110px;top:535px;width:12px;height:11px;background:#e0e0e0;border:1px solid #bbb"></div>
<div class="a" style="left:582px;top:533px;width:49px;height:15px;background:#fcfcfc;border-top:1px solid #777;border-left:1px solid #777"></div>
<div class="t" style="left:584px;top:536.21px;font-size:7.8px;color:#222;">100.00</div>
<div class="a" style="left:634px;top:533px;width:46px;height:15px;background:#fcfcfc;border-top:1px solid #777;border-left:1px solid #777"></div>
<div class="t" style="left:636px;top:536.21px;font-size:7.8px;color:#222;">100.00</div>
<div class="t" style="left:682px;top:536.21px;font-size:7.8px;color:#222;">No Character</div>
<div class="a" style="left:548px;top:548px;width:252px;height:1px;background:#fafafa;"></div>
<div class="a" style="left:9px;top:550.5px;width:392px;height:15.5px;background:#fdfdfd;border-top:1px solid #b0b0b0;border-left:1px solid #999"></div>
<div class="a" style="left:404px;top:550px;width:384px;height:15px;background:#8d98a2;border-top:1px solid #666;border-left:1px solid #666"></div>
<div class="a" style="left:0px;top:565.5px;width:800px;height:1px;background:#f0f0f0;"></div>
<div class="a" style="left:9px;top:566px;width:791px;height:13px;background:#dadadc;border-top:1px solid #8a8a8a;border-left:1px solid #999"></div>
<div class="t" style="left:21px;top:569.62px;font-size:7.6px;color:#111;">Duplicate Option Box</div>
<div class="a" style="left:788px;top:549px;width:12px;height:16px;background:#d8d8d8;"></div>
<svg width="20" height="30" style="left:788px;top:534px"><rect x="1" y="2" width="12" height="9" fill="#eee" stroke="#222" stroke-width="1"/><rect x="1" y="18" width="12" height="8" fill="#eee" stroke="#222" stroke-width="1"/><path d="M1 21h12" stroke="#222" stroke-width="1.5"/></svg>
<div class="a" style="left:497px;top:268px;width:303px;height:271px;background:#d8dde6;border-radius:4px 0 0 0"></div>
<div class="a" style="left:497.5px;top:268.5px;width:303px;height:1px;background:#e8eef8;"></div>
<svg width="303" height="30" style="left:497px;top:268px"><rect x="0" y="1.5" width="303" height="1" fill="#d2d6de"/><rect x="0" y="2.5" width="303" height="1" fill="#c6cad2"/><rect x="0" y="3.5" width="303" height="1" fill="#d2d6de"/><rect x="0" y="4.5" width="303" height="1" fill="#c6cad2"/><rect x="0" y="5.5" width="303" height="1" fill="#d2d6de"/><rect x="0" y="6.5" width="303" height="1" fill="#c6cad2"/><rect x="0" y="7.5" width="303" height="1" fill="#d2d6de"/><rect x="0" y="8.5" width="303" height="1" fill="#c6cad2"/><rect x="0" y="9.5" width="303" height="1" fill="#d2d6de"/><rect x="0" y="10.5" width="303" height="1" fill="#c6cad2"/><rect x="0" y="11.5" width="303" height="1" fill="#d2d6de"/><rect x="0" y="12.5" width="303" height="1" fill="#c6cad2"/><rect x="0" y="13.5" width="303" height="1" fill="#d2d6de"/><rect x="0" y="14.5" width="303" height="1" fill="#c6cad2"/><rect x="0" y="15.5" width="303" height="1" fill="#d2d6de"/><rect x="0" y="16.5" width="303" height="1" fill="#c6cad2"/><rect x="0" y="17.5" width="303" height="1" fill="#d2d6de"/><rect x="0" y="18.5" width="303" height="1" fill="#c6cad2"/><rect x="0" y="19.5" width="303" height="1" fill="#d2d6de"/><rect x="0" y="20.5" width="303" height="1" fill="#c6cad2"/><rect x="0" y="0" width="303" height="1.5" fill="#e4ecf8"/><rect x="0" y="20.5" width="303" height="1.2" fill="#a8acb4"/><circle cx="292" cy="12.3" r="5" fill="#c8ccd8" stroke="#8890a8" stroke-width="1.2"/><path d="M6.5 15.5V7.5h2l2.5 4 2.5 -4h2v8h-2v-4l-2.5 3 -2.5 -3v4z" fill="#f0f0f0" stroke="#111" stroke-width="1.1"/></svg>
<div class="t" style="left:607.5px;top:275.06px;font-size:9.9px;color:#a4a4ac;">Duplicate Options</div>
<div class="a" style="left:500px;top:290px;width:300px;height:12.5px;background:#e0e0e0;"></div>
<div class="t" style="left:504px;top:291.68px;font-size:7.5px;color:#a8a8a8;">Edit</div>
<div class="t" style="left:524.7px;top:291.68px;font-size:7.5px;color:#a8a8a8;">Help</div>
<div class="a" style="left:500px;top:302.5px;width:300px;height:1px;background:#f6f6f6;"></div>
<div class="a" style="left:500px;top:303.5px;width:300px;height:235px;background:#dedede;"></div>
<div class="t" style="right:185px;top:307.19px;font-size:7.3px;color:#222">Translate</div>
<div class="a" style="left:618.8px;top:303.8px;width:53.700000000000045px;height:14.199999999999989px;background:#fcfcfc;border-top:1.5px solid #707070;border-left:1.5px solid #707070;border-bottom:1px solid #f0f0f0"></div>
<div class="t" style="left:621.3px;top:306.85px;font-size:7.9px;color:#1a1a1a;">0.0000</div>
<div class="a" style="left:674.5px;top:303.8px;width:53.0px;height:14.199999999999989px;background:#fcfcfc;border-top:1.5px solid #707070;border-left:1.5px solid #707070;border-bottom:1px solid #f0f0f0"></div>
<div class="t" style="left:677.0px;top:306.85px;font-size:7.9px;color:#1a1a1a;">0.0000</div>
<div class="a" style="left:730px;top:303.8px;width:53.799999999999955px;height:14.199999999999989px;background:#fcfcfc;border-top:1.5px solid #707070;border-left:1.5px solid #707070;border-bottom:1px solid #f0f0f0"></div>
<div class="t" style="left:732.5px;top:306.85px;font-size:7.9px;color:#1a1a1a;">0.0000</div>
<div class="t" style="right:185px;top:322.69px;font-size:7.3px;color:#222">Rotate</div>
<div class="a" style="left:618.8px;top:319px;width:53.700000000000045px;height:14.800000000000011px;background:#fcfcfc;border-top:1.5px solid #707070;border-left:1.5px solid #707070;border-bottom:1px solid #f0f0f0"></div>
<div class="t" style="left:621.3px;top:322.35px;font-size:7.9px;color:#1a1a1a;">0.0000</div>
<div class="a" style="left:674.5px;top:319px;width:53.0px;height:14.800000000000011px;background:#fcfcfc;border-top:1.5px solid #707070;border-left:1.5px solid #707070;border-bottom:1px solid #f0f0f0"></div>
<div class="t" style="left:677.0px;top:322.35px;font-size:7.9px;color:#1a1a1a;">18.0000</div>
<div class="a" style="left:730px;top:319px;width:53.799999999999955px;height:14.800000000000011px;background:#fcfcfc;border-top:1.5px solid #707070;border-left:1.5px solid #707070;border-bottom:1px solid #f0f0f0"></div>
<div class="t" style="left:732.5px;top:322.35px;font-size:7.9px;color:#1a1a1a;">0.0000</div>
<div class="t" style="right:185px;top:338.19px;font-size:7.3px;color:#222">Scale</div>
<div class="a" style="left:618.8px;top:335px;width:53.700000000000045px;height:13.800000000000011px;background:#fcfcfc;border-top:1.5px solid #707070;border-left:1.5px solid #707070;border-bottom:1px solid #f0f0f0"></div>
<div class="t" style="left:621.3px;top:337.85px;font-size:7.9px;color:#1a1a1a;">1.0000</div>
<div class="a" style="left:674.5px;top:335px;width:53.0px;height:13.800000000000011px;background:#fcfcfc;border-top:1.5px solid #707070;border-left:1.5px solid #707070;border-bottom:1px solid #f0f0f0"></div>
<div class="t" style="left:677.0px;top:337.85px;font-size:7.9px;color:#1a1a1a;">1.0000</div>
<div class="a" style="left:730px;top:335px;width:53.799999999999955px;height:13.800000000000011px;background:#fcfcfc;border-top:1.5px solid #707070;border-left:1.5px solid #707070;border-bottom:1px solid #f0f0f0"></div>
<div class="t" style="left:732.5px;top:337.85px;font-size:7.9px;color:#1a1a1a;">1.0000</div>
<div class="t" style="right:185px;top:353.29px;font-size:7.3px;color:#222">Number of Copies</div>
<div class="a" style="left:618.8px;top:350px;width:53.700000000000045px;height:13.800000000000011px;background:#fcfcfc;border-top:1.5px solid #707070;border-left:1.5px solid #707070;border-bottom:1px solid #f0f0f0"></div>
<div class="t" style="left:621.3px;top:352.85px;font-size:7.9px;color:#1a1a1a;">19</div>
<svg width="800" height="579" style="left:0;top:0"><path d="M677.5 353.5H780" stroke="#555" stroke-width="1.2"/><path d="M677.5 353.5v2.5" stroke="#555" stroke-width="1"/><path d="M698.5 351.5v6.5h-2" stroke="#222" stroke-width="1.3" fill="none"/></svg>
<div class="a" style="left:500px;top:365.5px;width:300px;height:1px;background:#a8a8a8;"></div>
<div class="a" style="left:500px;top:366.5px;width:300px;height:1px;background:#f8f8f8;"></div>
<div class="t" style="right:185px;top:369.59px;font-size:7.3px;color:#222">Geometry Type</div>
<svg width="12" height="12" style="left:617.5px;top:367.5px"><circle cx="6" cy="6" r="4.2" fill="#e4e4e4"/><path d="M3 9a4.2 4.2 0 0 1 6 -6" stroke="#606060" stroke-width="1.1" fill="none"/><path d="M9 3a4.2 4.2 0 0 1 -6 6" stroke="#fafafa" stroke-width="1.1" fill="none"/><circle cx="6" cy="6" r="1.5" fill="#111"/></svg>
<div class="t" style="left:630.5px;top:369.73px;font-size:7.4px;color:#222;">Copy</div>
<svg width="12" height="12" style="left:729px;top:367.5px"><circle cx="6" cy="6" r="4.2" fill="#e4e4e4"/><path d="M3 9a4.2 4.2 0 0 1 6 -6" stroke="#606060" stroke-width="1.1" fill="none"/><path d="M9 3a4.2 4.2 0 0 1 -6 6" stroke="#fafafa" stroke-width="1.1" fill="none"/></svg>
<div class="t" style="left:741.8px;top:369.73px;font-size:7.4px;color:#222;">Instance</div>
<div class="t" style="right:185px;top:380.29px;font-size:7.3px;color:#222">Group under</div>
<svg width="12" height="12" style="left:617.5px;top:378.2px"><circle cx="6" cy="6" r="4.2" fill="#e4e4e4"/><path d="M3 9a4.2 4.2 0 0 1 6 -6" stroke="#606060" stroke-width="1.1" fill="none"/><path d="M9 3a4.2 4.2 0 0 1 -6 6" stroke="#fafafa" stroke-width="1.1" fill="none"/><circle cx="6" cy="6" r="1.5" fill="#111"/></svg>
<div class="t" style="left:630.5px;top:380.43px;font-size:7.4px;color:#222;">Parent</div>
<svg width="12" height="12" style="left:673px;top:378.2px"><circle cx="6" cy="6" r="4.2" fill="#e4e4e4"/><path d="M3 9a4.2 4.2 0 0 1 6 -6" stroke="#606060" stroke-width="1.1" fill="none"/><path d="M9 3a4.2 4.2 0 0 1 -6 6" stroke="#fafafa" stroke-width="1.1" fill="none"/></svg>
<div class="t" style="left:685.8px;top:380.43px;font-size:7.4px;color:#222;">World</div>
<svg width="12" height="12" style="left:729px;top:378.2px"><circle cx="6" cy="6" r="4.2" fill="#e4e4e4"/><path d="M3 9a4.2 4.2 0 0 1 6 -6" stroke="#606060" stroke-width="1.1" fill="none"/><path d="M9 3a4.2 4.2 0 0 1 -6 6" stroke="#fafafa" stroke-width="1.1" fill="none"/></svg>
<div class="t" style="left:741.8px;top:380.43px;font-size:7.4px;color:#222;">New Group</div>
<div class="a" style="left:619.5px;top:391.0px;width:9px;height:9px;background:#e4e4e4;border-top:1px solid #b8b8b8;border-left:1px solid #b8b8b8;border-right:1px solid #f4f4f4;border-bottom:1px solid #f4f4f4"></div>
<div class="t" style="left:630.5px;top:391.53px;font-size:7.4px;color:#b4b4b4;">Smart Transform</div>
<div class="a" style="left:500px;top:402px;width:300px;height:1px;background:#a8a8a8;"></div>
<div class="a" style="left:500px;top:403px;width:300px;height:1px;background:#f8f8f8;"></div>
<div class="a" style="left:619.5px;top:405.5px;width:9px;height:9px;background:#f8f8f8;border-top:1px solid #555;border-left:1px solid #555;border-right:1px solid #f4f4f4;border-bottom:1px solid #f4f4f4"></div>
<div class="t" style="left:631px;top:406.13px;font-size:7.4px;color:#222;">Duplicate Input Graph</div>
<div class="a" style="left:619.5px;top:416.5px;width:9px;height:9px;background:#f8f8f8;border-top:1px solid #555;border-left:1px solid #555;border-right:1px solid #f4f4f4;border-bottom:1px solid #f4f4f4"></div>
<div class="t" style="left:631px;top:417.13px;font-size:7.4px;color:#222;">Duplicate Input Connections</div>
<div class="a" style="left:500px;top:427.5px;width:300px;height:1px;background:#a8a8a8;"></div>
<div class="a" style="left:500px;top:428.5px;width:300px;height:1px;background:#f8f8f8;"></div>
<div class="a" style="left:619.5px;top:431.0px;width:9px;height:9px;background:#f8f8f8;border-top:1px solid #555;border-left:1px solid #555;border-right:1px solid #f4f4f4;border-bottom:1px solid #f4f4f4"></div>
<div class="t" style="left:631px;top:431.63px;font-size:7.4px;color:#222;">Assign Unique Name to Child Nodes</div>
<div class="a" style="left:504.5px;top:514.5px;width:103.5px;height:17.5px;background:#dcdcdc;border-top:1px solid #f8f8f8;border-left:1px solid #f8f8f8;border-bottom:1.5px solid #505050;border-right:1.5px solid #505050"></div>
<div class="t" style="left:504.5px;width:103.5px;text-align:center;top:519.2px;font-size:7.5px;color:#111">Duplicate</div>
<div class="a" style="left:612px;top:514.5px;width:105.5px;height:17.5px;background:#dcdcdc;border-top:1px solid #f8f8f8;border-left:1px solid #f8f8f8;border-bottom:1.5px solid #505050;border-right:1.5px solid #505050"></div>
<div class="t" style="left:612px;width:105.5px;text-align:center;top:519.2px;font-size:7.5px;color:#111">Apply</div>
<div class="a" style="left:719.5px;top:514.5px;width:108.5px;height:17.5px;background:#dcdcdc;border-top:1px solid #f8f8f8;border-left:1px solid #f8f8f8;border-bottom:1.5px solid #505050;border-right:1.5px solid #505050"></div>
<div class="t" style="left:719.5px;width:108.5px;text-align:center;top:519.2px;font-size:7.5px;color:#111">Close</div>
<div class="a" style="left:497px;top:536px;width:303px;height:3px;background:#c4cad6;"></div>
<div class="a" style="left:0px;top:13px;width:22px;height:69px;background:#d8d8d8;"></div>
<svg width="22" height="72" style="left:0;top:12px">
<rect x="5" y="4" width="1" height="1" fill="#777"/><rect x="7" y="5" width="1" height="1" fill="#999"/>
<rect x="5" y="7" width="1" height="1" fill="#777"/><rect x="7" y="8" width="1" height="1" fill="#999"/>
<rect x="5" y="10" width="1" height="1" fill="#777"/><rect x="7" y="11" width="1" height="1" fill="#999"/>
<rect x="5" y="13" width="1" height="1" fill="#777"/><rect x="7" y="14" width="1" height="1" fill="#999"/>
<rect x="5" y="16" width="1" height="1" fill="#777"/><rect x="7" y="17" width="1" height="1" fill="#999"/>
<rect x="5" y="19" width="1" height="1" fill="#777"/><rect x="7" y="20" width="1" height="1" fill="#999"/>
<rect x="5" y="22" width="1" height="1" fill="#777"/><rect x="7" y="23" width="1" height="1" fill="#999"/>
<rect x="5" y="25" width="1" height="1" fill="#777"/><rect x="7" y="26" width="1" height="1" fill="#999"/>
<rect x="5" y="28" width="1" height="1" fill="#777"/><rect x="7" y="29" width="1" height="1" fill="#999"/>
<rect x="5" y="31" width="1" height="1" fill="#777"/><rect x="7" y="32" width="1" height="1" fill="#999"/>
<rect x="5" y="34" width="1" height="1" fill="#777"/><rect x="7" y="35" width="1" height="1" fill="#999"/>
<rect x="5" y="37" width="1" height="1" fill="#777"/><rect x="7" y="38" width="1" height="1" fill="#999"/>
<rect x="5" y="40" width="1" height="1" fill="#777"/><rect x="7" y="41" width="1" height="1" fill="#999"/>
<rect x="5" y="43" width="1" height="1" fill="#777"/><rect x="7" y="44" width="1" height="1" fill="#999"/>
<rect x="5" y="46" width="1" height="1" fill="#777"/><rect x="7" y="47" width="1" height="1" fill="#999"/>
<rect x="5" y="49" width="1" height="1" fill="#777"/><rect x="7" y="50" width="1" height="1" fill="#999"/>
<rect x="5" y="52" width="1" height="1" fill="#777"/><rect x="7" y="53" width="1" height="1" fill="#999"/>
<rect x="5" y="55" width="1" height="1" fill="#777"/><rect x="7" y="56" width="1" height="1" fill="#999"/>
<rect x="5" y="58" width="1" height="1" fill="#777"/><rect x="7" y="59" width="1" height="1" fill="#999"/>
<rect x="5" y="61" width="1" height="1" fill="#777"/><rect x="7" y="62" width="1" height="1" fill="#999"/>
<rect x="5" y="64" width="1" height="1" fill="#777"/><rect x="7" y="65" width="1" height="1" fill="#999"/>
<rect x="5" y="67" width="1" height="1" fill="#777"/><rect x="7" y="68" width="1" height="1" fill="#999"/>
<path d="M3.5 3h5l-2.5 3z" fill="#222"/><path d="M3.5 25h5l-2.5 3z" fill="#222"/>
<rect x="11" y="2.5" width="11" height="16" fill="#fcfcfc" stroke="#777" stroke-width="0.8"/>
<text x="14.8" y="13.3" font-family="Liberation Sans" font-weight="bold" font-size="8" fill="#111">M</text>
<rect x="10.5" y="41" width="12" height="14" fill="#e4e4e4" stroke="#aaa" stroke-width="0.6"/>
<rect x="10.5" y="55" width="12" height="13" fill="#d0d0d0"/><path d="M15.5 60h8l-4 4z" fill="#111"/>
</svg>
<div class="a" style="left:22px;top:13px;width:179.5px;height:337.5px;background:#fafafa;border:1px solid #7a7a7a;border-top:none"></div>
<div class="a" style="left:24px;top:16.8px;width:175.5px;height:1px;background:#a0a0a0;"></div>
<div class="a" style="left:24px;top:19.1px;width:175.5px;height:1px;background:#a8a8a8;"></div>
<div class="t" style="left:36px;top:22.71px;font-size:7.8px;color:#000;letter-spacing:-0.12px;-webkit-text-stroke:0.15px #000">Undo</div>
<div class="t" style="left:145.5px;top:22.71px;font-size:7.8px;color:#000;letter-spacing:-0.12px;-webkit-text-stroke:0.15px #000">Ctrl+z</div>
<div class="t" style="left:36px;top:35.21px;font-size:7.8px;color:#000;letter-spacing:-0.12px;-webkit-text-stroke:0.15px #000">Redo</div>
<div class="t" style="left:145.5px;top:35.21px;font-size:7.8px;color:#000;letter-spacing:-0.12px;-webkit-text-stroke:0.15px #000">Z</div>
<div class="t" style="left:36px;top:47.01px;font-size:7.8px;color:#000;letter-spacing:-0.12px;-webkit-text-stroke:0.15px #000">Repeat "Add Selected Objects"</div>
<div class="t" style="left:145.5px;top:47.01px;font-size:7.8px;color:#000;letter-spacing:-0.12px;-webkit-text-stroke:0.15px #000">g</div>
<div class="t" style="left:36px;top:58.71px;font-size:7.8px;color:#000;letter-spacing:-0.12px;-webkit-text-stroke:0.15px #000">Recent Commands...</div>
<div class="a" style="left:24px;top:70.8px;width:175.5px;height:1px;background:#a8a8a8;"></div>
<div class="a" style="left:24px;top:71.8px;width:175.5px;height:1px;background:#ffffff;"></div>
<div class="t" style="left:36px;top:77.21px;font-size:7.8px;color:#000;letter-spacing:-0.12px;-webkit-text-stroke:0.15px #000">Cut</div>
<div class="t" style="left:145.5px;top:77.21px;font-size:7.8px;color:#000;letter-spacing:-0.12px;-webkit-text-stroke:0.15px #000">Ctrl+x</div>
<div class="t" style="left:36px;top:88.91px;font-size:7.8px;color:#000;letter-spacing:-0.12px;-webkit-text-stroke:0.15px #000">Copy</div>
<div class="t" style="left:145.5px;top:88.91px;font-size:7.8px;color:#000;letter-spacing:-0.12px;-webkit-text-stroke:0.15px #000">Ctrl+c</div>
<div class="t" style="left:36px;top:100.51px;font-size:7.8px;color:#000;letter-spacing:-0.12px;-webkit-text-stroke:0.15px #000">Paste</div>
<div class="t" style="left:145.5px;top:100.51px;font-size:7.8px;color:#000;letter-spacing:-0.12px;-webkit-text-stroke:0.15px #000">Ctrl+v</div>
<div class="a" style="left:24px;top:112.2px;width:175.5px;height:1px;background:#a8a8a8;"></div>
<div class="a" style="left:24px;top:113.2px;width:175.5px;height:1px;background:#ffffff;"></div>
<div class="t" style="left:36px;top:118.51px;font-size:7.8px;color:#000;letter-spacing:-0.12px;-webkit-text-stroke:0.15px #000">Keys</div>
<div class="a" style="left:24px;top:130.2px;width:175.5px;height:1px;background:#a8a8a8;"></div>
<div class="a" style="left:24px;top:131.2px;width:175.5px;height:1px;background:#ffffff;"></div>
<div class="t" style="left:36px;top:136.21px;font-size:7.8px;color:#000;letter-spacing:-0.12px;-webkit-text-stroke:0.15px #000">Delete</div>
<div class="t" style="left:36px;top:148.21px;font-size:7.8px;color:#000;letter-spacing:-0.12px;-webkit-text-stroke:0.15px #000">Delete by Type</div>
<div class="t" style="left:36px;top:160.21px;font-size:7.8px;color:#000;letter-spacing:-0.12px;-webkit-text-stroke:0.15px #000">Delete All by Type</div>
<div class="a" style="left:24px;top:172.0px;width:175.5px;height:1px;background:#a8a8a8;"></div>
<div class="a" style="left:24px;top:173.0px;width:175.5px;height:1px;background:#ffffff;"></div>
<div class="t" style="left:36px;top:178.41px;font-size:7.8px;color:#000;letter-spacing:-0.12px;-webkit-text-stroke:0.15px #000">Select All</div>
<div class="t" style="left:36px;top:190.11px;font-size:7.8px;color:#000;letter-spacing:-0.12px;-webkit-text-stroke:0.15px #000">Select Hierarchy</div>
<div class="t" style="left:36px;top:201.81px;font-size:7.8px;color:#000;letter-spacing:-0.12px;-webkit-text-stroke:0.15px #000">Invert Selection</div>
<div class="t" style="left:36px;top:213.71px;font-size:7.8px;color:#000;letter-spacing:-0.12px;-webkit-text-stroke:0.15px #000">Select All by Type</div>
<div class="t" style="left:36px;top:225.61px;font-size:7.8px;color:#000;letter-spacing:-0.12px;-webkit-text-stroke:0.15px #000">Quick Select Sets</div>
<div class="t" style="left:36px;top:237.31px;font-size:7.8px;color:#000;letter-spacing:-0.12px;-webkit-text-stroke:0.15px #000">Paint Selection Tool</div>
<div class="a" style="left:24px;top:249.0px;width:175.5px;height:1px;background:#a8a8a8;"></div>
<div class="a" style="left:24px;top:250.0px;width:175.5px;height:1px;background:#ffffff;"></div>
<div class="t" style="left:36px;top:255.51px;font-size:7.8px;color:#000;letter-spacing:-0.12px;-webkit-text-stroke:0.15px #000">Duplicate</div>
<div class="t" style="left:145.5px;top:255.51px;font-size:7.8px;color:#000;letter-spacing:-0.12px;-webkit-text-stroke:0.15px #000">Ctrl+d</div>
<div class="t" style="left:36px;top:267.51px;font-size:7.8px;color:#000;letter-spacing:-0.12px;-webkit-text-stroke:0.15px #000">Duplicate with Transform</div>
<div class="t" style="left:145.5px;top:267.51px;font-size:7.8px;color:#000;letter-spacing:-0.12px;-webkit-text-stroke:0.15px #000">D</div>
<div class="a" style="left:24px;top:279.3px;width:175.5px;height:1px;background:#a8a8a8;"></div>
<div class="a" style="left:24px;top:280.3px;width:175.5px;height:1px;background:#ffffff;"></div>
<div class="t" style="left:36px;top:285.31px;font-size:7.8px;color:#000;letter-spacing:-0.12px;-webkit-text-stroke:0.15px #000">Group</div>
<div class="t" style="left:145.5px;top:285.31px;font-size:7.8px;color:#000;letter-spacing:-0.12px;-webkit-text-stroke:0.15px #000">Ctrl+g</div>
<div class="t" style="left:36px;top:297.21px;font-size:7.8px;color:#000;letter-spacing:-0.12px;-webkit-text-stroke:0.15px #000">Ungroup</div>
<div class="t" style="left:36px;top:309.01px;font-size:7.8px;color:#000;letter-spacing:-0.12px;-webkit-text-stroke:0.15px #000">Level of Detail</div>
<div class="a" style="left:24px;top:320.7px;width:175.5px;height:1px;background:#a8a8a8;"></div>
<div class="a" style="left:24px;top:321.7px;width:175.5px;height:1px;background:#ffffff;"></div>
<div class="t" style="left:36px;top:327.11px;font-size:7.8px;color:#000;letter-spacing:-0.12px;-webkit-text-stroke:0.15px #000">Parent</div>
<div class="t" style="left:145.5px;top:327.11px;font-size:7.8px;color:#000;letter-spacing:-0.12px;-webkit-text-stroke:0.15px #000">p</div>
<div class="t" style="left:36px;top:339.01px;font-size:7.8px;color:#000;letter-spacing:-0.12px;-webkit-text-stroke:0.15px #000">Unparent</div>
<div class="t" style="left:145.5px;top:339.01px;font-size:7.8px;color:#000;letter-spacing:-0.12px;-webkit-text-stroke:0.15px #000">P</div>
<svg width="800" height="579" style="left:0;top:0"><path d="M172.5 118.8l3 3 -3 3z" fill="#111"/><path d="M172.5 148.5l3 3 -3 3z" fill="#111"/><path d="M172.5 160.5l3 3 -3 3z" fill="#111"/><path d="M172.5 214l3 3 -3 3z" fill="#111"/><path d="M172.5 225.9l3 3 -3 3z" fill="#111"/><rect x="188.8" y="237.7" width="6" height="6.3" rx="1.2" fill="#111"/><rect x="190.3" y="239.4" width="2.6" height="2.8" fill="#e8e8e8"/><rect x="183" y="253" width="16.4" height="11.4" fill="#7ab2e4"/><rect x="188.8" y="255.9" width="6" height="6.3" rx="1.2" fill="#111"/><rect x="190.3" y="257.6" width="2.6" height="2.8" fill="#e8e8e8"/><rect x="188.8" y="285.70000000000005" width="6" height="6.3" rx="1.2" fill="#111"/><rect x="190.3" y="287.40000000000003" width="2.6" height="2.8" fill="#e8e8e8"/><rect x="188.8" y="297.6" width="6" height="6.3" rx="1.2" fill="#111"/><rect x="190.3" y="299.3" width="2.6" height="2.8" fill="#e8e8e8"/><path d="M172.5 309.3l3 3 -3 3z" fill="#111"/><rect x="188.8" y="327.5" width="6" height="6.3" rx="1.2" fill="#111"/><rect x="190.3" y="329.2" width="2.6" height="2.8" fill="#e8e8e8"/><rect x="188.8" y="339.40000000000003" width="6" height="6.3" rx="1.2" fill="#111"/><rect x="190.3" y="341.1" width="2.6" height="2.8" fill="#e8e8e8"/></svg>
<svg width="800" height="579" style="left:0;top:0" fill="none" stroke-linecap="round" stroke-linejoin="round">
<path d="M31 266.5 Q90 268.8 150 268.9 L201 268.8" stroke="#c8202a" stroke-width="1.5"/>
<path d="M177 258.1 L182.2 249.8 L196.7 249.8 L199.3 259 L196.2 264.7 L184.9 267.3 Z" stroke="#c8202a" stroke-width="1.5"/>
<path d="M208.5 253 Q213 251.5 217.7 252.2 Q218.5 254 215 256.5 L209.4 261.6 Q215 262 220.3 262.9" stroke="#c8202a" stroke-width="1.9"/>
<path d="M546 239.5C541.2 239.2 527.0 239.2 517.5 237.5C508.0 235.8 497.1 233.5 489 229.4C480.9 225.3 474.9 219.1 468.8 213C462.7 206.9 456.2 200.2 452.5 192.8C448.8 185.4 446.4 176.5 446.4 168.4C446.4 160.3 447.4 150.1 452.5 144C457.6 137.9 466.2 134.6 477 132C487.8 129.4 505.3 127.9 517.5 128.6C529.7 129.3 541.2 131.4 550 136C558.8 140.6 564.6 147.9 570 156C575.4 164.1 580.1 175.9 582.5 184.7C584.9 193.5 585.5 201.6 584.5 209C583.5 216.4 580.8 224.1 576.4 229.4C572.0 234.7 561.1 238.9 558 240.8" stroke="#c8202a" stroke-width="1.6"/>
<path d="M606 195 L607 207" stroke="#c8202a" stroke-width="1.5"/>
<path d="M679.5 332 Q695 332.8 711 332" stroke="#c8202a" stroke-width="1.3"/><path d="M620 360.8 Q630 360 640.5 360.8" stroke="#c8202a" stroke-width="1.3"/>
<path d="M538 518 Q540 514 548 511 L586 511 L590 522 L574 532 L551 533 L543 528 L538 522z" stroke="#c8202a" stroke-width="1.5"/>
<path d="M591.5 492.5 Q597 491.5 600 494 L595 500 Q601 502 600 505 Q598 508.5 587.5 508.8" stroke="#c8202a" stroke-width="1.8"/>
</svg>
<svg width="120" height="40" style="left:680px;top:0">
<g transform="translate(23 20) rotate(-38)"><ellipse cx="0" cy="0" rx="17" ry="7.5" stroke="#6a6a6a" stroke-width="3.6" fill="none"/><ellipse cx="0" cy="0" rx="17" ry="7.5" stroke="#fafafa" stroke-width="2" fill="none"/><path d="M-6 3 Q-10 -2 -2 -4" stroke="#6a6a6a" stroke-width="1" fill="none"/></g>
<g transform="translate(-3 0) scale(1.1 1) skewX(-12) translate(4 0)"><path d="M34 14l-2 4M44 13l2 4M39 11l-1 6q-1 5 -6 8M39 17q2 5 6 8M52 12h8l-1 5h-8zM51.5 14.5h8M50 19h12M55 17l-1 8M50 25h12M51 22h10M52 19l-2 3M66 12h5l-1 12h-5zM65.5 18h5M73 15h9M79 11l-1 13q0 1 -2 0M74 18l2 3M88 11l-3 6M86.5 15l-1 10M91 16l10 -1M97 11q0 8 5 13M99 12l2 1M94 18l-3 6" stroke="#5e5e5e" stroke-width="3.6" fill="none" stroke-linecap="round"/><path d="M34 14l-2 4M44 13l2 4M39 11l-1 6q-1 5 -6 8M39 17q2 5 6 8M52 12h8l-1 5h-8zM51.5 14.5h8M50 19h12M55 17l-1 8M50 25h12M51 22h10M52 19l-2 3M66 12h5l-1 12h-5zM65.5 18h5M73 15h9M79 11l-1 13q0 1 -2 0M74 18l2 3M88 11l-3 6M86.5 15l-1 10M91 16l10 -1M97 11q0 8 5 13M99 12l2 1M94 18l-3 6" stroke="#fafafa" stroke-width="1.8" fill="none" stroke-linecap="round"/></g>
<text x="33" y="32.5" font-family="Liberation Sans" font-weight="bold" font-size="6.5" fill="#f8f8f8" stroke="#6a6a6a" stroke-width="1" paint-order="stroke" textLength="79" lengthAdjust="spacing">www.hxsd.com</text>
</svg>
<svg width="800" height="579" style="left:0;top:0" fill="none" stroke-linecap="butt" stroke-linejoin="miter">
<path d="M668.9 529.1 L675.0 529.1 L670.9 536.9 L674.3 536.9 L668.7 547.9 L671.2 547.9 L670.5 549.5 L658.8 549.5 L663.8 540.8 L661.2 540.8zM673.8 551.9 L680.3 551.9 L674.7 560.1 L676.2 560.1 L675.3 561.7 L658.8 561.7 L664.1 555.2 L667.2 555.2zM689.4 528.4 L694.3 528.4 L675.4 561.6 L669.2 561.6zM680.3 533.3 L704.5 533.3 L704.5 537.9 L677.8 537.9zM699.5 533.3 L704.5 533.3 L704.5 561.6 L699.5 561.6zM686.5 540.7 L690.1 538.5 L695.6 551.6 L691.6 553.8zM720.4 520.2 L728.0 520.2 L719.5 544.0 L711.9 544.0zM723.7 527.8 L744.6 527.8 L744.6 534.0 L721.4 534.0zM738.5 527.8 L745.1 527.8 L745.6 539.2 L760.0 539.2 L760.0 543.5 L738.9 543.5zM712.3 543.5 L745.6 543.5 L745.6 546.8 L711.2 546.8zM724.2 543.5 L730.6 543.5 L730.6 559.6 L724.2 559.6zM700.0 557.3 L744.6 557.3 L744.6 561.7 L700.0 561.7zM705.7 549.7 L713.3 549.7 L710.4 557.3 L702.8 557.3zM745.0 538.6 L787.5 538.6 L787.0 543.2 L745.0 543.2zM780.8 538.6 L787.7 538.6 L781.5 568.4 L774.5 568.4zM774.5 567.3 L794.7 567.3 L794.7 572.5 L774.0 572.5zM751.2 544.5 L758.3 544.5 L753.5 562.2 L746.6 562.2zM758.5 545.1 L765.2 545.1 L769.4 558.5 L762.6 558.5zM769.9 543.5 L776.6 543.5 L770.4 558.5 L763.7 558.5z" fill="#e07a1e" stroke="none"/>
<circle cx="738" cy="553.5" r="3.6" fill="#e07a1e"/><circle cx="738" cy="553.5" r="2.4" stroke="#f4e020" stroke-width="1.2" fill="#9aa4b0"/>
</svg>
<svg width="130" height="20" style="left:656px;top:561px"><text x="2" y="12.5" font-family="Liberation Sans" font-weight="bold" font-style="italic" font-size="12" fill="#5a5a5a" textLength="112" lengthAdjust="spacingAndGlyphs">NARKii.COM</text></svg>
</body></html>
